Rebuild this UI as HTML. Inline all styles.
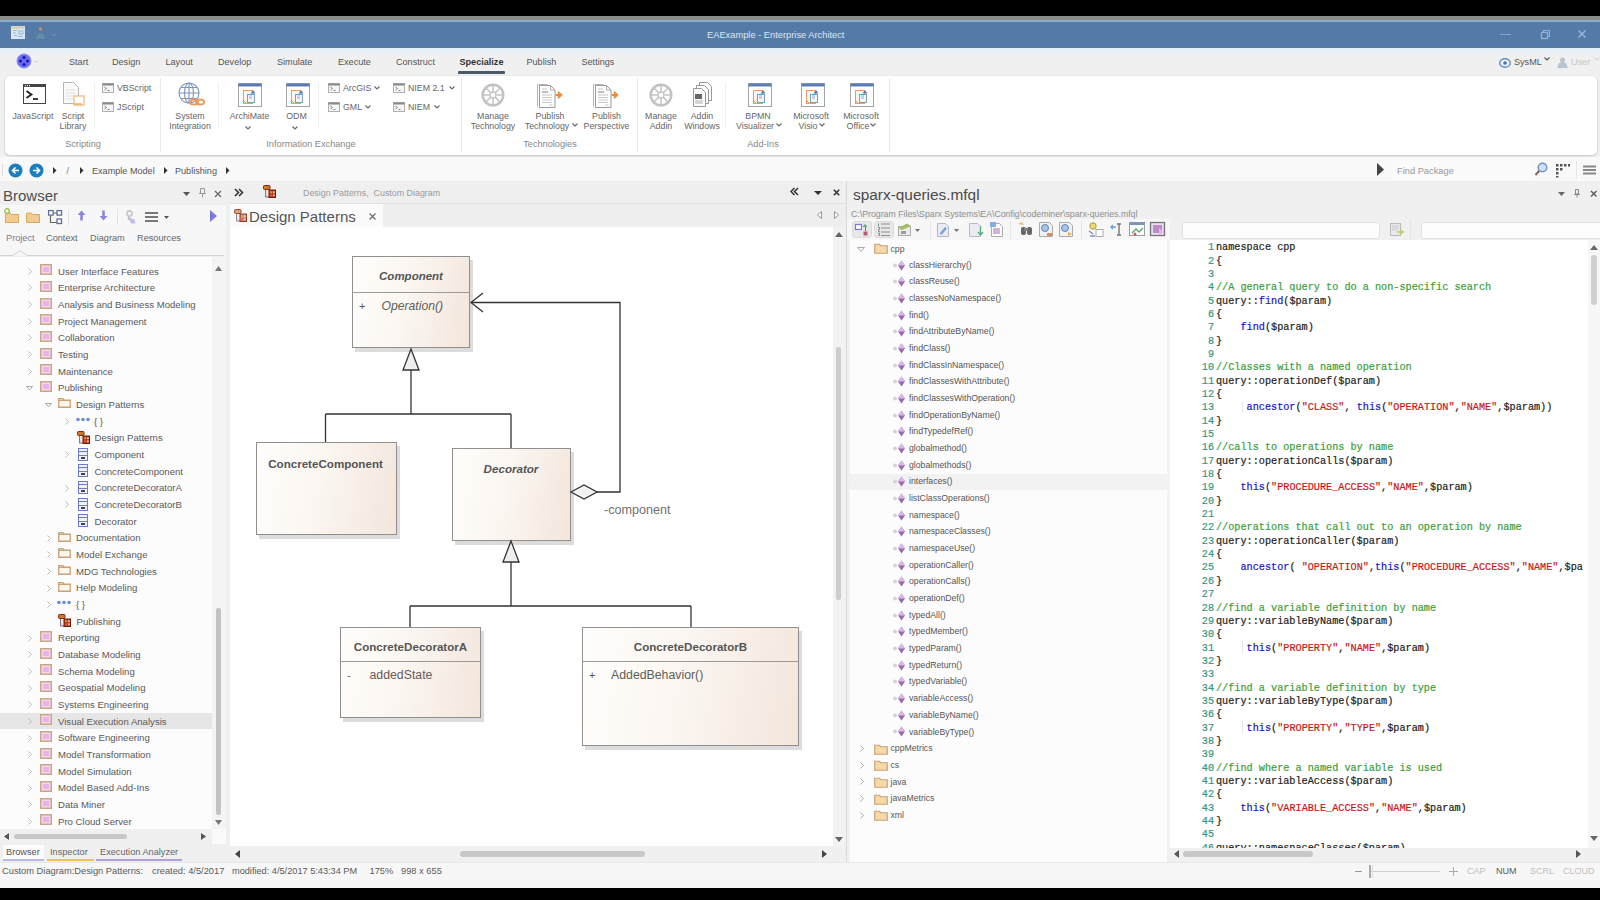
<!DOCTYPE html>
<html><head><meta charset="utf-8">
<style>
*{box-sizing:border-box;margin:0;padding:0}
html,body{width:1600px;height:900px;overflow:hidden;background:#000;font-family:"Liberation Sans",sans-serif;color:#444}
.a{position:absolute}
.t{position:absolute;white-space:nowrap;line-height:1}
svg.a{overflow:visible}
</style></head><body>
<div class="a" style="left:0px;top:0px;width:1600px;height:900px;background:#000;"></div>
<div class="a" style="left:0px;top:16px;width:1600px;height:872px;background:#f0f0f0;"></div>
<div class="a" style="left:0px;top:16px;width:1600px;height:4px;background:#8a8c89;"></div>
<div class="a" style="left:0px;top:20px;width:1600px;height:2px;background:#8cadd2;"></div>
<div class="a" style="left:0px;top:22px;width:1600px;height:26px;background:#547ba8;"></div>
<div class="a" style="left:0px;top:46px;width:1600px;height:2px;background:#58789c;"></div>
<svg class="a" style="left:11px;top:26px;" width="14" height="13" viewBox="0 0 14 13"><rect x="0" y="0" width="14" height="13" fill="#dbe6f3"/><rect x="0.5" y="0.5" width="13" height="2" fill="#d8c8a8"/><path d="M2 4.5h4M2 7h3M8 5h4v3H8zM3 9.5h3M7 10.5h5" stroke="#9fb6d6" stroke-width="1.1" fill="none"/></svg>
<svg class="a" style="left:35px;top:26px;" width="10" height="14" viewBox="0 0 10 14"><circle cx="5.5" cy="3" r="1.8" fill="#d9885a" opacity=".9"/><path d="M1 13c0-3.5 2-5.5 4.5-5.5S10 9.5 10 13z" fill="#6c9cac" opacity=".55"/></svg>
<svg class="a" style="left:51px;top:33px;" width="6" height="4" viewBox="0 0 6 4"><path d="M0.5 0.5L3 3L5.5 0.5" stroke="#7d96b5" fill="none"/></svg>
<div class="t" style="left:707px;top:30.83px;font-size:9.3px;color:#dce6f2;font-weight:normal;font-style:normal;font-family:'Liberation Sans',sans-serif;">EAExample - Enterprise Architect</div>
<div class="a" style="left:1500px;top:34px;width:11px;height:1px;background:#86a2c6;"></div>
<svg class="a" style="left:1540px;top:30px;" width="10" height="10" viewBox="0 0 10 10"><rect x="1.5" y="2.5" width="6" height="6" fill="none" stroke="#97afcf" stroke-width="1.3"/><path d="M3.5 2.5V0.5h6v6h-2" fill="none" stroke="#97afcf" stroke-width="1.1"/></svg>
<svg class="a" style="left:1577px;top:29px;" width="10" height="10" viewBox="0 0 10 10"><path d="M1.5 1.5L8.5 8.5M8.5 1.5L1.5 8.5" stroke="#a4badb" stroke-width="1.2"/></svg>
<div class="a" style="left:0px;top:48px;width:1600px;height:8px;background:linear-gradient(#e0effb,#e6f0f8 30%,#efefef);"></div>
<svg class="a" style="left:16px;top:53px;" width="16" height="16" viewBox="0 0 16 16"><circle cx="8" cy="8" r="7" fill="#6b6df0" stroke="#8f8ff8"/><circle cx="8" cy="4.5" r="1.6" fill="#1a1ab0"/><circle cx="4.5" cy="8" r="1.6" fill="#1a1ab0"/><circle cx="11.5" cy="8" r="1.6" fill="#1a1ab0"/><circle cx="8" cy="11.5" r="1.6" fill="#1a1ab0"/></svg>
<svg class="a" style="left:34px;top:60px;" width="5" height="3" viewBox="0 0 5 3"><path d="M0.5 0.5L2.5 2.5L4.5 0.5" stroke="#ccc" fill="none"/></svg>
<div class="t" style="left:69px;top:57.60px;font-size:9.1px;color:#555;font-weight:normal;font-style:normal;font-family:'Liberation Sans',sans-serif;">Start</div>
<div class="t" style="left:112px;top:57.60px;font-size:9.1px;color:#555;font-weight:normal;font-style:normal;font-family:'Liberation Sans',sans-serif;">Design</div>
<div class="t" style="left:165.5px;top:57.60px;font-size:9.1px;color:#555;font-weight:normal;font-style:normal;font-family:'Liberation Sans',sans-serif;">Layout</div>
<div class="t" style="left:218px;top:57.60px;font-size:9.1px;color:#555;font-weight:normal;font-style:normal;font-family:'Liberation Sans',sans-serif;">Develop</div>
<div class="t" style="left:277px;top:57.60px;font-size:9.1px;color:#555;font-weight:normal;font-style:normal;font-family:'Liberation Sans',sans-serif;">Simulate</div>
<div class="t" style="left:338px;top:57.60px;font-size:9.1px;color:#555;font-weight:normal;font-style:normal;font-family:'Liberation Sans',sans-serif;">Execute</div>
<div class="t" style="left:396px;top:57.60px;font-size:9.1px;color:#555;font-weight:normal;font-style:normal;font-family:'Liberation Sans',sans-serif;">Construct</div>
<div class="t" style="left:526.5px;top:57.60px;font-size:9.1px;color:#555;font-weight:normal;font-style:normal;font-family:'Liberation Sans',sans-serif;">Publish</div>
<div class="t" style="left:581.5px;top:57.60px;font-size:9.1px;color:#555;font-weight:normal;font-style:normal;font-family:'Liberation Sans',sans-serif;">Settings</div>
<div class="t" style="left:459.5px;top:57.60px;font-size:9.1px;color:#333;font-weight:bold;font-style:normal;font-family:'Liberation Sans',sans-serif;">Specialize</div>
<div class="a" style="left:458px;top:71px;width:47px;height:2.5px;background:#4d5966;border-radius:1px"></div>
<svg class="a" style="left:1499px;top:58px;" width="12" height="10" viewBox="0 0 12 10"><ellipse cx="6" cy="5" rx="5.3" ry="4.2" fill="none" stroke="#5b8fd0" stroke-width="1.4"/><circle cx="6" cy="5" r="1.8" fill="#3d73bd"/></svg>
<div class="t" style="left:1514px;top:57.80px;font-size:9.1px;color:#555;font-weight:normal;font-style:normal;font-family:'Liberation Sans',sans-serif;">SysML</div>
<svg class="a" style="left:1544px;top:57px;" width="6" height="4" viewBox="0 0 6 4"><path d="M0.5 0.5L3 3L5.5 0.5" stroke="#555" fill="none" stroke-width="1.1"/></svg>
<svg class="a" style="left:1557px;top:57px;" width="11" height="11" viewBox="0 0 11 11"><circle cx="5.5" cy="3" r="2.5" fill="#b8c4d0"/><path d="M0.5 11c0-4 2-6 5-6s5 2 5 6z" fill="#b8c4d0"/></svg>
<div class="t" style="left:1571px;top:57.80px;font-size:9.1px;color:#c8c8c8;font-weight:normal;font-style:normal;font-family:'Liberation Sans',sans-serif;">User</div>
<svg class="a" style="left:1594px;top:57px;" width="6" height="4" viewBox="0 0 6 4"><path d="M0.5 0.5L3 3L5.5 0.5" stroke="#ccc" fill="none"/></svg>
<div class="a" style="left:5px;top:76px;width:1592px;height:79px;background:#fff;border-radius:5px;box-shadow:0 1px 2.5px rgba(0,0,0,.16), 0 0 1px rgba(0,0,0,.12)"></div>
<svg class="a" style="left:23px;top:84px;" width="23" height="20" viewBox="0 0 23 20"><rect x="0.5" y="0.5" width="22" height="19" fill="#fff" stroke="#444"/><rect x="0.5" y="0.5" width="22" height="2.5" fill="#444"/><circle cx="2.5" cy="1.7" r=".6" fill="#fff"/><circle cx="4.5" cy="1.7" r=".6" fill="#fff"/><circle cx="6.5" cy="1.7" r=".6" fill="#fff"/><path d="M3.5 7l5 3.5-5 3.5" stroke="#222" stroke-width="1.8" fill="none"/><path d="M10 15h5" stroke="#222" stroke-width="1.8"/></svg>
<div class="t" style="left:12.4px;top:112.05px;font-size:8.8px;color:#666;font-weight:normal;font-style:normal;font-family:'Liberation Sans',sans-serif;">JavaScript</div>
<svg class="a" style="left:63px;top:82px;" width="23" height="25" viewBox="0 0 23 25"><path d="M0.5 0.5h10l5 5v16h-15z" fill="#fafafa" stroke="#b5b5b5"/><path d="M3 8h9M3 11h9M3 14h9M3 17h7" stroke="#ddd"/><rect x="11" y="14" width="10" height="9" fill="#fff" stroke="#f0c58a" stroke-width="1.5"/><path d="M11 22h8" stroke="#e8b56a" stroke-width="1.5"/></svg>
<div class="t" style="left:73px;top:112.05px;font-size:8.8px;color:#666;font-weight:normal;font-style:normal;font-family:'Liberation Sans',sans-serif;transform:translateX(-50%);">Script</div>
<div class="t" style="left:73px;top:121.85px;font-size:8.8px;color:#666;font-weight:normal;font-style:normal;font-family:'Liberation Sans',sans-serif;transform:translateX(-50%);">Library</div>
<div class="a" style="left:94px;top:82px;width:1px;height:46px;background:#f0f0f0;"></div>
<svg class="a" style="left:102px;top:83px;" width="12" height="10" viewBox="0 0 12 10"><rect x="0.5" y="0.5" width="11" height="9" fill="#f6f6f6" stroke="#b0b0b0"/><rect x="0.5" y="0.5" width="11" height="2" fill="#8a8a8a"/><path d="M2.5 4l2 1.5-2 1.5M5.5 7.5h2" stroke="#777" fill="none" stroke-width=".9"/></svg>
<div class="t" style="left:117px;top:84.05px;font-size:8.8px;color:#666;font-weight:normal;font-style:normal;font-family:'Liberation Sans',sans-serif;">VBScript</div>
<svg class="a" style="left:102px;top:102px;" width="12" height="10" viewBox="0 0 12 10"><rect x="0.5" y="0.5" width="11" height="9" fill="#f6f6f6" stroke="#b0b0b0"/><rect x="0.5" y="0.5" width="11" height="2" fill="#8a8a8a"/><path d="M2.5 4l2 1.5-2 1.5M5.5 7.5h2" stroke="#777" fill="none" stroke-width=".9"/></svg>
<div class="t" style="left:117px;top:103.05px;font-size:8.8px;color:#666;font-weight:normal;font-style:normal;font-family:'Liberation Sans',sans-serif;">JScript</div>
<div class="t" style="left:83px;top:140.21px;font-size:9.2px;color:#888;font-weight:normal;font-style:normal;font-family:'Liberation Sans',sans-serif;transform:translateX(-50%);">Scripting</div>
<div class="a" style="left:160px;top:78px;width:1px;height:74px;background:#eaeaea;"></div>
<svg class="a" style="left:177px;top:82px;" width="28" height="26" viewBox="0 0 28 26"><g fill="none" stroke="#7f95bb" stroke-width="1.1"><circle cx="12" cy="11" r="10"/><ellipse cx="12" cy="11" rx="4.5" ry="10"/><path d="M2 11h20M4 5.5h16M4 16.5h16M12 1v20"/></g><g fill="none" stroke="#f39a5a" stroke-width="2"><ellipse cx="17" cy="20" rx="4" ry="2.6"/><ellipse cx="23" cy="20" rx="4" ry="2.6"/></g></svg>
<div class="t" style="left:190px;top:112.05px;font-size:8.8px;color:#666;font-weight:normal;font-style:normal;font-family:'Liberation Sans',sans-serif;transform:translateX(-50%);">System</div>
<div class="t" style="left:190px;top:121.85px;font-size:8.8px;color:#666;font-weight:normal;font-style:normal;font-family:'Liberation Sans',sans-serif;transform:translateX(-50%);">Integration</div>
<div class="a" style="left:218px;top:82px;width:1px;height:46px;background:#f0f0f0;"></div>
<svg class="a" style="left:238px;top:83px;" width="24" height="24" viewBox="0 0 24 24"><rect x="0.5" y="0.5" width="23" height="23" fill="#fff" stroke="#a2a6ac"/><rect x="0.5" y="0.5" width="23" height="3" fill="#5a7db3"/><rect x="5.5" y="7.5" width="9" height="13" fill="#fff6ee" stroke="#ee9a66" stroke-width="1"/><rect x="9.5" y="11.5" width="7" height="8" fill="#f4f8fc" stroke="#7aa0b8" stroke-width="1"/><path d="M15 7l2.5 3.5h-5z" fill="#5a7ab8"/><path d="M11 13h3M11 15h3" stroke="#7d97c4" stroke-width=".8"/><path d="M5 17l3 3" stroke="#e8873c"/></svg>
<div class="t" style="left:249.5px;top:112.05px;font-size:8.8px;color:#666;font-weight:normal;font-style:normal;font-family:'Liberation Sans',sans-serif;transform:translateX(-50%);">ArchiMate</div>
<svg class="a" style="left:245px;top:125.5px;" width="6" height="4" viewBox="0 0 6 4"><path d="M0.5 0.5L3 3L5.5 0.5" stroke="#666" fill="none" stroke-width="1.1"/></svg>
<svg class="a" style="left:286px;top:83px;" width="24" height="24" viewBox="0 0 24 24"><rect x="0.5" y="0.5" width="23" height="23" fill="#fff" stroke="#a2a6ac"/><rect x="0.5" y="0.5" width="23" height="3" fill="#5a7db3"/><rect x="5.5" y="7.5" width="9" height="13" fill="#fff6ee" stroke="#ee9a66" stroke-width="1"/><rect x="9.5" y="11.5" width="7" height="8" fill="#f4f8fc" stroke="#7aa0b8" stroke-width="1"/><path d="M15 7l2.5 3.5h-5z" fill="#5a7ab8"/><path d="M11 13h3M11 15h3" stroke="#7d97c4" stroke-width=".8"/><path d="M5 17l3 3" stroke="#e8873c"/></svg>
<div class="t" style="left:296.5px;top:112.05px;font-size:8.8px;color:#666;font-weight:normal;font-style:normal;font-family:'Liberation Sans',sans-serif;transform:translateX(-50%);">ODM</div>
<svg class="a" style="left:292px;top:125.5px;" width="6" height="4" viewBox="0 0 6 4"><path d="M0.5 0.5L3 3L5.5 0.5" stroke="#666" fill="none" stroke-width="1.1"/></svg>
<div class="a" style="left:318px;top:82px;width:1px;height:46px;background:#f0f0f0;"></div>
<svg class="a" style="left:328px;top:83px;" width="12" height="10" viewBox="0 0 12 10"><rect x="0.5" y="0.5" width="11" height="9" fill="#f6f6f6" stroke="#b0b0b0"/><rect x="0.5" y="0.5" width="11" height="2" fill="#8a8a8a"/><path d="M2.5 4l2 1.5-2 1.5M5.5 7.5h2" stroke="#777" fill="none" stroke-width=".9"/></svg>
<div class="t" style="left:343px;top:84.05px;font-size:8.8px;color:#666;font-weight:normal;font-style:normal;font-family:'Liberation Sans',sans-serif;">ArcGIS</div>
<svg class="a" style="left:374px;top:86px;" width="6" height="4" viewBox="0 0 6 4"><path d="M0.5 0.5L3 3L5.5 0.5" stroke="#666" fill="none" stroke-width="1.1"/></svg>
<svg class="a" style="left:328px;top:102px;" width="12" height="10" viewBox="0 0 12 10"><rect x="0.5" y="0.5" width="11" height="9" fill="#f6f6f6" stroke="#b0b0b0"/><rect x="0.5" y="0.5" width="11" height="2" fill="#8a8a8a"/><path d="M2.5 4l2 1.5-2 1.5M5.5 7.5h2" stroke="#777" fill="none" stroke-width=".9"/></svg>
<div class="t" style="left:343px;top:103.05px;font-size:8.8px;color:#666;font-weight:normal;font-style:normal;font-family:'Liberation Sans',sans-serif;">GML</div>
<svg class="a" style="left:365px;top:105px;" width="6" height="4" viewBox="0 0 6 4"><path d="M0.5 0.5L3 3L5.5 0.5" stroke="#666" fill="none" stroke-width="1.1"/></svg>
<svg class="a" style="left:393px;top:83px;" width="12" height="10" viewBox="0 0 12 10"><rect x="0.5" y="0.5" width="11" height="9" fill="#f6f6f6" stroke="#b0b0b0"/><rect x="0.5" y="0.5" width="11" height="2" fill="#8a8a8a"/><path d="M2.5 4l2 1.5-2 1.5M5.5 7.5h2" stroke="#777" fill="none" stroke-width=".9"/></svg>
<div class="t" style="left:408px;top:84.05px;font-size:8.8px;color:#666;font-weight:normal;font-style:normal;font-family:'Liberation Sans',sans-serif;">NIEM 2.1</div>
<svg class="a" style="left:449px;top:86px;" width="6" height="4" viewBox="0 0 6 4"><path d="M0.5 0.5L3 3L5.5 0.5" stroke="#666" fill="none" stroke-width="1.1"/></svg>
<svg class="a" style="left:393px;top:102px;" width="12" height="10" viewBox="0 0 12 10"><rect x="0.5" y="0.5" width="11" height="9" fill="#f6f6f6" stroke="#b0b0b0"/><rect x="0.5" y="0.5" width="11" height="2" fill="#8a8a8a"/><path d="M2.5 4l2 1.5-2 1.5M5.5 7.5h2" stroke="#777" fill="none" stroke-width=".9"/></svg>
<div class="t" style="left:408px;top:103.05px;font-size:8.8px;color:#666;font-weight:normal;font-style:normal;font-family:'Liberation Sans',sans-serif;">NIEM</div>
<svg class="a" style="left:434px;top:105px;" width="6" height="4" viewBox="0 0 6 4"><path d="M0.5 0.5L3 3L5.5 0.5" stroke="#666" fill="none" stroke-width="1.1"/></svg>
<div class="t" style="left:311px;top:140.21px;font-size:9.2px;color:#888;font-weight:normal;font-style:normal;font-family:'Liberation Sans',sans-serif;transform:translateX(-50%);">Information Exchange</div>
<div class="a" style="left:461px;top:78px;width:1px;height:74px;background:#eaeaea;"></div>
<svg class="a" style="left:481px;top:82.5px;" width="24" height="24" viewBox="0 0 24 24"><g stroke="#c2c2c2" fill="none"><circle cx="12" cy="12" r="10.3" stroke-width="2.4"/><circle cx="12" cy="12" r="3" stroke-width="1.4"/><g stroke-width="1.5"><line x1="15.60" y1="12.00" x2="22.00" y2="12.00"/><line x1="14.55" y1="14.55" x2="19.07" y2="19.07"/><line x1="12.00" y1="15.60" x2="12.00" y2="22.00"/><line x1="9.45" y1="14.55" x2="4.93" y2="19.07"/><line x1="8.40" y1="12.00" x2="2.00" y2="12.00"/><line x1="9.45" y1="9.45" x2="4.93" y2="4.93"/><line x1="12.00" y1="8.40" x2="12.00" y2="2.00"/><line x1="14.55" y1="9.45" x2="19.07" y2="4.93"/></g></g></svg>
<div class="t" style="left:493px;top:112.05px;font-size:8.8px;color:#666;font-weight:normal;font-style:normal;font-family:'Liberation Sans',sans-serif;transform:translateX(-50%);">Manage</div>
<div class="t" style="left:493px;top:121.85px;font-size:8.8px;color:#666;font-weight:normal;font-style:normal;font-family:'Liberation Sans',sans-serif;transform:translateX(-50%);">Technology</div>
<svg class="a" style="left:537px;top:84px;" width="27" height="24" viewBox="0 0 27 24"><path d="M0.5 22.5V0.5h10" fill="none" stroke="#b8b8b8"/><path d="M2.5 23.5V1.5h11l4.5 4.5v17.5z" fill="#fff" stroke="#9a9a9a"/><path d="M13.5 1.5v4.5h4.5" fill="none" stroke="#aaa"/><path d="M5 5h5M5 8h6M5 11h10M5 13.5h10M5 16h10M5 18.5h10M12 21h3" stroke="#c8c8c8"/><path d="M5 8h6" stroke="#999"/><path d="M18.5 11h5M21 8l3.2 3-3.2 3" stroke="#ec8a3c" stroke-width="2" fill="none"/></svg>
<div class="t" style="left:550px;top:112.05px;font-size:8.8px;color:#666;font-weight:normal;font-style:normal;font-family:'Liberation Sans',sans-serif;transform:translateX(-50%);">Publish</div>
<div class="t" style="left:547px;top:121.85px;font-size:8.8px;color:#666;font-weight:normal;font-style:normal;font-family:'Liberation Sans',sans-serif;transform:translateX(-50%);">Technology</div>
<svg class="a" style="left:572px;top:123px;" width="6" height="4" viewBox="0 0 6 4"><path d="M0.5 0.5L3 3L5.5 0.5" stroke="#666" fill="none" stroke-width="1.1"/></svg>
<svg class="a" style="left:593px;top:84px;" width="27" height="24" viewBox="0 0 27 24"><path d="M0.5 22.5V0.5h10" fill="none" stroke="#b8b8b8"/><path d="M2.5 23.5V1.5h11l4.5 4.5v17.5z" fill="#fff" stroke="#9a9a9a"/><path d="M13.5 1.5v4.5h4.5" fill="none" stroke="#aaa"/><path d="M5 5h5M5 8h6M5 11h10M5 13.5h10M5 16h10M5 18.5h10M12 21h3" stroke="#c8c8c8"/><path d="M5 8h6" stroke="#999"/><path d="M18.5 11h5M21 8l3.2 3-3.2 3" stroke="#ec8a3c" stroke-width="2" fill="none"/></svg>
<div class="t" style="left:606.5px;top:112.05px;font-size:8.8px;color:#666;font-weight:normal;font-style:normal;font-family:'Liberation Sans',sans-serif;transform:translateX(-50%);">Publish</div>
<div class="t" style="left:606.5px;top:121.85px;font-size:8.8px;color:#666;font-weight:normal;font-style:normal;font-family:'Liberation Sans',sans-serif;transform:translateX(-50%);">Perspective</div>
<div class="t" style="left:550px;top:140.21px;font-size:9.2px;color:#888;font-weight:normal;font-style:normal;font-family:'Liberation Sans',sans-serif;transform:translateX(-50%);">Technologies</div>
<div class="a" style="left:637px;top:78px;width:1px;height:74px;background:#eaeaea;"></div>
<svg class="a" style="left:649px;top:82.5px;" width="24" height="24" viewBox="0 0 24 24"><g stroke="#c2c2c2" fill="none"><circle cx="12" cy="12" r="10.3" stroke-width="2.4"/><circle cx="12" cy="12" r="3" stroke-width="1.4"/><g stroke-width="1.5"><line x1="15.60" y1="12.00" x2="22.00" y2="12.00"/><line x1="14.55" y1="14.55" x2="19.07" y2="19.07"/><line x1="12.00" y1="15.60" x2="12.00" y2="22.00"/><line x1="9.45" y1="14.55" x2="4.93" y2="19.07"/><line x1="8.40" y1="12.00" x2="2.00" y2="12.00"/><line x1="9.45" y1="9.45" x2="4.93" y2="4.93"/><line x1="12.00" y1="8.40" x2="12.00" y2="2.00"/><line x1="14.55" y1="9.45" x2="19.07" y2="4.93"/></g></g></svg>
<div class="t" style="left:661px;top:112.05px;font-size:8.8px;color:#666;font-weight:normal;font-style:normal;font-family:'Liberation Sans',sans-serif;transform:translateX(-50%);">Manage</div>
<div class="t" style="left:661px;top:121.85px;font-size:8.8px;color:#666;font-weight:normal;font-style:normal;font-family:'Liberation Sans',sans-serif;transform:translateX(-50%);">Addin</div>
<svg class="a" style="left:693px;top:82px;" width="20" height="26" viewBox="0 0 20 26"><path d="M6.5 0.5h8l4 4v14h-12z" fill="#fff" stroke="#999"/><path d="M3.5 3.5h8l4 4v14h-12z" fill="#fff" stroke="#999"/><path d="M0.5 6.5h8l4 4v14h-12z" fill="#fff" stroke="#999"/><rect x="2" y="12" width="7" height="5" fill="#666"/><path d="M2 19h8M2 21h8" stroke="#aaa"/></svg>
<div class="t" style="left:702px;top:112.05px;font-size:8.8px;color:#666;font-weight:normal;font-style:normal;font-family:'Liberation Sans',sans-serif;transform:translateX(-50%);">Addin</div>
<div class="t" style="left:702px;top:121.85px;font-size:8.8px;color:#666;font-weight:normal;font-style:normal;font-family:'Liberation Sans',sans-serif;transform:translateX(-50%);">Windows</div>
<div class="a" style="left:724.5px;top:82px;width:1px;height:46px;background:#f0f0f0;"></div>
<svg class="a" style="left:748px;top:83px;" width="24" height="24" viewBox="0 0 24 24"><rect x="0.5" y="0.5" width="23" height="23" fill="#fff" stroke="#a2a6ac"/><rect x="0.5" y="0.5" width="23" height="3" fill="#5a7db3"/><rect x="5.5" y="7.5" width="9" height="13" fill="#fff6ee" stroke="#ee9a66" stroke-width="1"/><rect x="9.5" y="11.5" width="7" height="8" fill="#f4f8fc" stroke="#7aa0b8" stroke-width="1"/><path d="M15 7l2.5 3.5h-5z" fill="#5a7ab8"/><path d="M11 13h3M11 15h3" stroke="#7d97c4" stroke-width=".8"/><path d="M5 17l3 3" stroke="#e8873c"/></svg>
<div class="t" style="left:758px;top:112.05px;font-size:8.8px;color:#666;font-weight:normal;font-style:normal;font-family:'Liberation Sans',sans-serif;transform:translateX(-50%);">BPMN</div>
<div class="t" style="left:755px;top:121.85px;font-size:8.8px;color:#666;font-weight:normal;font-style:normal;font-family:'Liberation Sans',sans-serif;transform:translateX(-50%);">Visualizer</div>
<svg class="a" style="left:776px;top:123px;" width="6" height="4" viewBox="0 0 6 4"><path d="M0.5 0.5L3 3L5.5 0.5" stroke="#666" fill="none" stroke-width="1.1"/></svg>
<svg class="a" style="left:801px;top:83px;" width="24" height="24" viewBox="0 0 24 24"><rect x="0.5" y="0.5" width="23" height="23" fill="#fff" stroke="#a2a6ac"/><rect x="0.5" y="0.5" width="23" height="3" fill="#5a7db3"/><rect x="5.5" y="7.5" width="9" height="13" fill="#fff6ee" stroke="#ee9a66" stroke-width="1"/><rect x="9.5" y="11.5" width="7" height="8" fill="#f4f8fc" stroke="#7aa0b8" stroke-width="1"/><path d="M15 7l2.5 3.5h-5z" fill="#5a7ab8"/><path d="M11 13h3M11 15h3" stroke="#7d97c4" stroke-width=".8"/><path d="M5 17l3 3" stroke="#e8873c"/></svg>
<div class="t" style="left:811px;top:112.05px;font-size:8.8px;color:#666;font-weight:normal;font-style:normal;font-family:'Liberation Sans',sans-serif;transform:translateX(-50%);">Microsoft</div>
<div class="t" style="left:808px;top:121.85px;font-size:8.8px;color:#666;font-weight:normal;font-style:normal;font-family:'Liberation Sans',sans-serif;transform:translateX(-50%);">Visio</div>
<svg class="a" style="left:819px;top:123px;" width="6" height="4" viewBox="0 0 6 4"><path d="M0.5 0.5L3 3L5.5 0.5" stroke="#666" fill="none" stroke-width="1.1"/></svg>
<svg class="a" style="left:850px;top:83px;" width="24" height="24" viewBox="0 0 24 24"><rect x="0.5" y="0.5" width="23" height="23" fill="#fff" stroke="#a2a6ac"/><rect x="0.5" y="0.5" width="23" height="3" fill="#5a7db3"/><rect x="5.5" y="7.5" width="9" height="13" fill="#fff6ee" stroke="#ee9a66" stroke-width="1"/><rect x="9.5" y="11.5" width="7" height="8" fill="#f4f8fc" stroke="#7aa0b8" stroke-width="1"/><path d="M15 7l2.5 3.5h-5z" fill="#5a7ab8"/><path d="M11 13h3M11 15h3" stroke="#7d97c4" stroke-width=".8"/><path d="M5 17l3 3" stroke="#e8873c"/></svg>
<div class="t" style="left:861px;top:112.05px;font-size:8.8px;color:#666;font-weight:normal;font-style:normal;font-family:'Liberation Sans',sans-serif;transform:translateX(-50%);">Microsoft</div>
<div class="t" style="left:858px;top:121.85px;font-size:8.8px;color:#666;font-weight:normal;font-style:normal;font-family:'Liberation Sans',sans-serif;transform:translateX(-50%);">Office</div>
<svg class="a" style="left:870px;top:123px;" width="6" height="4" viewBox="0 0 6 4"><path d="M0.5 0.5L3 3L5.5 0.5" stroke="#666" fill="none" stroke-width="1.1"/></svg>
<div class="t" style="left:763px;top:140.21px;font-size:9.2px;color:#888;font-weight:normal;font-style:normal;font-family:'Liberation Sans',sans-serif;transform:translateX(-50%);">Add-Ins</div>
<div class="a" style="left:889px;top:78px;width:1px;height:74px;background:#eaeaea;"></div>
<div class="a" style="left:0px;top:157px;width:1600px;height:24px;background:#f9f9f9;"></div>
<div class="a" style="left:2px;top:164px;width:1px;height:12px;background:#ddd;"></div>
<svg class="a" style="left:8px;top:163px;" width="15" height="15" viewBox="0 0 15 15"><circle cx="7.5" cy="7.5" r="7" fill="#1a7fc1"/><path d="M11 7.5H4.5M7.5 4.5l-3 3 3 3" stroke="#fff" stroke-width="1.6" fill="none"/></svg>
<svg class="a" style="left:29px;top:163px;" width="15" height="15" viewBox="0 0 15 15"><circle cx="7.5" cy="7.5" r="7" fill="#1a7fc1"/><path d="M4 7.5h6.5M7.5 4.5l3 3-3 3" stroke="#fff" stroke-width="1.6" fill="none"/></svg>
<svg class="a" style="left:53px;top:166.7px;" width="3.5" height="7.0" viewBox="0 0 3.5 7.0"><path d="M0 0L3.5 3.5L0 7.0z" fill="#333"/></svg>
<div class="t" style="left:66.5px;top:167.38px;font-size:9px;color:#777;font-weight:normal;font-style:normal;font-family:'Liberation Sans',sans-serif;">/</div>
<svg class="a" style="left:80px;top:166.7px;" width="3.5" height="7.0" viewBox="0 0 3.5 7.0"><path d="M0 0L3.5 3.5L0 7.0z" fill="#333"/></svg>
<div class="t" style="left:92px;top:167.30px;font-size:9.1px;color:#555;font-weight:normal;font-style:normal;font-family:'Liberation Sans',sans-serif;">Example Model</div>
<svg class="a" style="left:164px;top:166.7px;" width="3.5" height="7.0" viewBox="0 0 3.5 7.0"><path d="M0 0L3.5 3.5L0 7.0z" fill="#333"/></svg>
<div class="t" style="left:175px;top:167.30px;font-size:9.1px;color:#555;font-weight:normal;font-style:normal;font-family:'Liberation Sans',sans-serif;">Publishing</div>
<svg class="a" style="left:226px;top:166.7px;" width="3.5" height="7.0" viewBox="0 0 3.5 7.0"><path d="M0 0L3.5 3.5L0 7.0z" fill="#333"/></svg>
<svg class="a" style="left:1377px;top:163px;" width="7" height="13" viewBox="0 0 7 13"><path d="M0 0L7 6.5L0 13z" fill="#444"/></svg>
<div class="a" style="left:1392px;top:160px;width:138px;height:20px;background:#fbfbfb;border-radius:2px"></div>
<div class="t" style="left:1397px;top:166.63px;font-size:9.3px;color:#999;font-weight:normal;font-style:normal;font-family:'Liberation Sans',sans-serif;">Find Package</div>
<svg class="a" style="left:1534px;top:162px;" width="14" height="15" viewBox="0 0 14 15"><path d="M5.5 8.5L1.5 13" stroke="#8a6a60" stroke-width="2.2"/><circle cx="8.5" cy="5.5" r="4.3" fill="#cfe0f8" stroke="#6f95c8" stroke-width="1.5"/></svg>
<svg class="a" style="left:1556px;top:164px;" width="14" height="13" viewBox="0 0 14 13"><g fill="#555"><rect x="0" y="0" width="2.5" height="2.5"/><rect x="4" y="0" width="2.5" height="2.5"/><rect x="8" y="0" width="2.5" height="2.5"/><rect x="12" y="0" width="2" height="2.5"/><rect x="0" y="4" width="2.5" height="2.5"/><rect x="4" y="4" width="2.5" height="2.5"/><rect x="0" y="8" width="2.5" height="2.5"/><rect x="0" y="12" width="2.5" height="1.5"/></g></svg>
<div class="a" style="left:1576px;top:161px;width:1px;height:18px;background:#e6e6e6;"></div>
<svg class="a" style="left:1583px;top:165px;" width="14" height="10" viewBox="0 0 14 10"><path d="M0 1.5h13M0 5h13M0 8.5h13" stroke="#888" stroke-width="1.8"/></svg>
<div class="a" style="left:0px;top:181px;width:226px;height:681px;background:#f0f0f0;"></div>
<div class="a" style="left:0px;top:205px;width:226px;height:51px;background:#f7f7f7;"></div>
<div class="a" style="left:226px;top:181px;width:4px;height:681px;background:#f0f0f0;"></div>
<div class="a" style="left:229.5px;top:181px;width:1px;height:681px;background:#e0e0e0;"></div>
<div class="t" style="left:3px;top:187.50px;font-size:15px;color:#505050;font-weight:normal;font-style:normal;font-family:'Liberation Sans',sans-serif;">Browser</div>
<svg class="a" style="left:183px;top:192px;" width="7" height="4" viewBox="0 0 7 4"><path d="M0 0h7L3.5 4z" fill="#555"/></svg>
<svg class="a" style="left:199px;top:188px;" width="7" height="10" viewBox="0 0 7 10"><path d="M1.5 0.5h4v5h-4z M0 5.5h7 M3.5 5.5v4" stroke="#999" fill="none"/></svg>
<svg class="a" style="left:214px;top:190px;" width="8" height="8" viewBox="0 0 8 8"><path d="M1 1l6 6M7 1l-6 6" stroke="#666" stroke-width="1.3"/></svg>
<svg class="a" style="left:5px;top:211px;" width="14" height="12" viewBox="0 0 14 12"><path d="M0.5 2.5v9h13v-8h-7l-1.5-1.5h-4z" fill="#f0cb92" stroke="#d9a95a"/></svg>
<svg class="a" style="left:4px;top:208px;" width="6" height="6" viewBox="0 0 6 6"><circle cx="3" cy="3" r="2.3" fill="#fff" stroke="#8fbf3a" stroke-width="1.2"/></svg>
<svg class="a" style="left:26px;top:211px;" width="14" height="12" viewBox="0 0 14 12"><path d="M0.5 2.5v9h13v-8h-7l-1.5-1.5h-4z" fill="#f0cb92" stroke="#d9a95a"/></svg>
<svg class="a" style="left:48px;top:210px;" width="14" height="14" viewBox="0 0 14 14"><path d="M2.5 5.5v7h6.5M5.5 3h4" stroke="#666" fill="none" stroke-width="1.2"/><g fill="#fff" stroke="#5c6f9c" stroke-width="1.3"><rect x="0.6" y="0.6" width="4.5" height="4.5"/><rect x="9" y="0.6" width="4.5" height="4.5"/><rect x="9" y="9" width="4.5" height="4.5"/></g></svg>
<div class="a" style="left:68px;top:209px;width:1px;height:16px;background:#e2e2e2;"></div>
<svg class="a" style="left:77px;top:210px;" width="9" height="11" viewBox="0 0 9 11"><path d="M4.5 0.5L8.5 5H5.8v5.5H3.2V5H0.5z" fill="#8a86e0"/></svg>
<svg class="a" style="left:99px;top:210px;" width="9" height="11" viewBox="0 0 9 11"><path d="M4.5 10.5L8.5 6H5.8V0.5H3.2V6H0.5z" fill="#8a86e0"/></svg>
<div class="a" style="left:117px;top:209px;width:1px;height:16px;background:#e2e2e2;"></div>
<svg class="a" style="left:125px;top:210px;" width="11" height="14" viewBox="0 0 11 14"><circle cx="4.5" cy="3.5" r="2.6" fill="none" stroke="#c8c8c8" stroke-width="1.6"/><path d="M3.5 6.5v3l3 4h4l-1-4-3-1z" fill="#c4bce8"/><path d="M3.5 6.5v3" stroke="#bbb" stroke-width="1.4"/></svg>
<svg class="a" style="left:145px;top:212px;" width="14" height="10" viewBox="0 0 14 10"><path d="M0 1h13M0 5h13M0 9h13" stroke="#777" stroke-width="1.8"/></svg>
<svg class="a" style="left:164px;top:216px;" width="5" height="3" viewBox="0 0 5 3"><path d="M0 0h5L2.5 3z" fill="#555"/></svg>
<svg class="a" style="left:210px;top:210px;" width="7" height="12" viewBox="0 0 7 12"><path d="M0 0L7 6L0 12z" fill="#7a7de0"/></svg>
<div class="t" style="left:6px;top:233.71px;font-size:9.2px;color:#7a7a9a;font-weight:normal;font-style:normal;font-family:'Liberation Sans',sans-serif;">Project</div>
<div class="t" style="left:46px;top:233.71px;font-size:9.2px;color:#666;font-weight:normal;font-style:normal;font-family:'Liberation Sans',sans-serif;">Context</div>
<div class="t" style="left:90px;top:233.71px;font-size:9.2px;color:#666;font-weight:normal;font-style:normal;font-family:'Liberation Sans',sans-serif;">Diagram</div>
<div class="t" style="left:137px;top:233.71px;font-size:9.2px;color:#666;font-weight:normal;font-style:normal;font-family:'Liberation Sans',sans-serif;">Resources</div>
<svg class="a" style="left:0px;top:249px;" width="226" height="8" viewBox="0 0 226 8"><path d="M0 6.5H13L20 1.5L27 6.5H224" stroke="#d4d4d4" fill="none"/></svg>
<div class="a" style="left:0px;top:257px;width:212px;height:572px;background:#fcfcfc;"></div>
<div class="a" style="left:212px;top:257px;width:14px;height:572px;background:#f4f4f4;"></div>
<svg class="a" style="left:215px;top:266px;" width="7" height="5" viewBox="0 0 7 5"><path d="M0 5L3.5 0L7 5z" fill="#777"/></svg>
<div class="a" style="left:216px;top:608px;width:5px;height:207px;background:#c2c2c2;border-radius:2px"></div>
<svg class="a" style="left:215px;top:820px;" width="7" height="5" viewBox="0 0 7 5"><path d="M0 0L7 0L3.5 5z" fill="#777"/></svg>
<div class="a" style="left:0px;top:829px;width:212px;height:15px;background:#f0f0f0;"></div>
<svg class="a" style="left:4px;top:833px;" width="5" height="7" viewBox="0 0 5 7"><path d="M5 0v7L0 3.5z" fill="#555"/></svg>
<div class="a" style="left:14px;top:834px;width:113px;height:5px;background:#c7c7c7;border-radius:3px"></div>
<svg class="a" style="left:201px;top:833px;" width="5" height="7" viewBox="0 0 5 7"><path d="M0 0v7l5-3.5z" fill="#555"/></svg>
<div class="a" style="left:212px;top:829px;width:14px;height:15px;background:#fafafa;"></div>
<div class="a" style="left:0px;top:844px;width:226px;height:18px;background:#f0f0f0;"></div>
<div class="a" style="left:3px;top:845px;width:41px;height:15px;background:#fcfcfc;"></div>
<div class="t" style="left:6px;top:847.71px;font-size:9.2px;color:#555;font-weight:normal;font-style:normal;font-family:'Liberation Sans',sans-serif;">Browser</div>
<div class="a" style="left:3px;top:859px;width:41px;height:1.5px;background:#b8b8e8;"></div>
<div class="t" style="left:50px;top:847.71px;font-size:9.2px;color:#666;font-weight:normal;font-style:normal;font-family:'Liberation Sans',sans-serif;">Inspector</div>
<div class="a" style="left:47px;top:859px;width:47px;height:1.5px;background:#f2c454;"></div>
<div class="t" style="left:100px;top:847.71px;font-size:9.2px;color:#666;font-weight:normal;font-style:normal;font-family:'Liberation Sans',sans-serif;">Execution Analyzer</div>
<div class="a" style="left:96px;top:859px;width:86px;height:1.5px;background:#b39ddb;"></div>
<div class="a" style="left:0px;top:713.3900000000001px;width:212px;height:16px;background:#e6e6e6;"></div>
<svg class="a" style="left:28.0px;top:267.8px;" width="4" height="7" viewBox="0 0 4 7"><path d="M0.5 0.5L3.5 3.5L0.5 6.5" stroke="#b4b4b4" fill="none" stroke-width=".9"/></svg>
<svg class="a" style="left:39.5px;top:264.3px;" width="12" height="11" viewBox="0 0 12 11"><rect x="0.75" y="0.75" width="10.5" height="9.5" fill="#f6d4f2" stroke="#c6aa86" stroke-width="1.5"/><rect x="3" y="3" width="6" height="5" fill="#e8b4e8"/></svg>
<div class="t" style="left:58px;top:266.57px;font-size:9.6px;color:#5a5a5a;font-weight:normal;font-style:normal;font-family:'Liberation Sans',sans-serif;">User Interface Features</div>
<svg class="a" style="left:28.0px;top:284.47px;" width="4" height="7" viewBox="0 0 4 7"><path d="M0.5 0.5L3.5 3.5L0.5 6.5" stroke="#b4b4b4" fill="none" stroke-width=".9"/></svg>
<svg class="a" style="left:39.5px;top:280.97px;" width="12" height="11" viewBox="0 0 12 11"><rect x="0.75" y="0.75" width="10.5" height="9.5" fill="#f6d4f2" stroke="#c6aa86" stroke-width="1.5"/><rect x="3" y="3" width="6" height="5" fill="#e8b4e8"/></svg>
<div class="t" style="left:58px;top:283.24px;font-size:9.6px;color:#5a5a5a;font-weight:normal;font-style:normal;font-family:'Liberation Sans',sans-serif;">Enterprise Architecture</div>
<svg class="a" style="left:28.0px;top:301.14px;" width="4" height="7" viewBox="0 0 4 7"><path d="M0.5 0.5L3.5 3.5L0.5 6.5" stroke="#b4b4b4" fill="none" stroke-width=".9"/></svg>
<svg class="a" style="left:39.5px;top:297.64px;" width="12" height="11" viewBox="0 0 12 11"><rect x="0.75" y="0.75" width="10.5" height="9.5" fill="#f6d4f2" stroke="#c6aa86" stroke-width="1.5"/><rect x="3" y="3" width="6" height="5" fill="#e8b4e8"/></svg>
<div class="t" style="left:58px;top:299.91px;font-size:9.6px;color:#5a5a5a;font-weight:normal;font-style:normal;font-family:'Liberation Sans',sans-serif;">Analysis and Business Modeling</div>
<svg class="a" style="left:28.0px;top:317.81px;" width="4" height="7" viewBox="0 0 4 7"><path d="M0.5 0.5L3.5 3.5L0.5 6.5" stroke="#b4b4b4" fill="none" stroke-width=".9"/></svg>
<svg class="a" style="left:39.5px;top:314.31px;" width="12" height="11" viewBox="0 0 12 11"><rect x="0.75" y="0.75" width="10.5" height="9.5" fill="#f6d4f2" stroke="#c6aa86" stroke-width="1.5"/><rect x="3" y="3" width="6" height="5" fill="#e8b4e8"/></svg>
<div class="t" style="left:58px;top:316.58px;font-size:9.6px;color:#5a5a5a;font-weight:normal;font-style:normal;font-family:'Liberation Sans',sans-serif;">Project Management</div>
<svg class="a" style="left:28.0px;top:334.48px;" width="4" height="7" viewBox="0 0 4 7"><path d="M0.5 0.5L3.5 3.5L0.5 6.5" stroke="#b4b4b4" fill="none" stroke-width=".9"/></svg>
<svg class="a" style="left:39.5px;top:330.98px;" width="12" height="11" viewBox="0 0 12 11"><rect x="0.75" y="0.75" width="10.5" height="9.5" fill="#f6d4f2" stroke="#c6aa86" stroke-width="1.5"/><rect x="3" y="3" width="6" height="5" fill="#e8b4e8"/></svg>
<div class="t" style="left:58px;top:333.25px;font-size:9.6px;color:#5a5a5a;font-weight:normal;font-style:normal;font-family:'Liberation Sans',sans-serif;">Collaboration</div>
<svg class="a" style="left:28.0px;top:351.15000000000003px;" width="4" height="7" viewBox="0 0 4 7"><path d="M0.5 0.5L3.5 3.5L0.5 6.5" stroke="#b4b4b4" fill="none" stroke-width=".9"/></svg>
<svg class="a" style="left:39.5px;top:347.65000000000003px;" width="12" height="11" viewBox="0 0 12 11"><rect x="0.75" y="0.75" width="10.5" height="9.5" fill="#f6d4f2" stroke="#c6aa86" stroke-width="1.5"/><rect x="3" y="3" width="6" height="5" fill="#e8b4e8"/></svg>
<div class="t" style="left:58px;top:349.92px;font-size:9.6px;color:#5a5a5a;font-weight:normal;font-style:normal;font-family:'Liberation Sans',sans-serif;">Testing</div>
<svg class="a" style="left:28.0px;top:367.82000000000005px;" width="4" height="7" viewBox="0 0 4 7"><path d="M0.5 0.5L3.5 3.5L0.5 6.5" stroke="#b4b4b4" fill="none" stroke-width=".9"/></svg>
<svg class="a" style="left:39.5px;top:364.32000000000005px;" width="12" height="11" viewBox="0 0 12 11"><rect x="0.75" y="0.75" width="10.5" height="9.5" fill="#f6d4f2" stroke="#c6aa86" stroke-width="1.5"/><rect x="3" y="3" width="6" height="5" fill="#e8b4e8"/></svg>
<div class="t" style="left:58px;top:366.59px;font-size:9.6px;color:#5a5a5a;font-weight:normal;font-style:normal;font-family:'Liberation Sans',sans-serif;">Maintenance</div>
<svg class="a" style="left:26.0px;top:385.99px;" width="7" height="5" viewBox="0 0 7 5"><path d="M0.5 0.5h6L3.5 4z" stroke="#aaa" fill="none"/></svg>
<svg class="a" style="left:39.5px;top:380.99px;" width="12" height="11" viewBox="0 0 12 11"><rect x="0.75" y="0.75" width="10.5" height="9.5" fill="#f6d4f2" stroke="#c6aa86" stroke-width="1.5"/><rect x="3" y="3" width="6" height="5" fill="#e8b4e8"/></svg>
<div class="t" style="left:58px;top:383.26px;font-size:9.6px;color:#5a5a5a;font-weight:normal;font-style:normal;font-family:'Liberation Sans',sans-serif;">Publishing</div>
<svg class="a" style="left:44.5px;top:402.66px;" width="7" height="5" viewBox="0 0 7 5"><path d="M0.5 0.5h6L3.5 4z" stroke="#aaa" fill="none"/></svg>
<svg class="a" style="left:58px;top:397.16px;" width="13" height="11" viewBox="0 0 13 11"><path d="M0.75 1.75v8.5h11.5v-7h-6l-1.3-1.5h-4.2z" fill="#fdf6ea" stroke="#c9a27a" stroke-width="1.3"/><path d="M0.75 3.5h11.5" stroke="#c9a27a" stroke-width="1"/></svg>
<div class="t" style="left:76px;top:399.93px;font-size:9.6px;color:#5a5a5a;font-weight:normal;font-style:normal;font-family:'Liberation Sans',sans-serif;">Design Patterns</div>
<svg class="a" style="left:65.0px;top:417.83000000000004px;" width="4" height="7" viewBox="0 0 4 7"><path d="M0.5 0.5L3.5 3.5L0.5 6.5" stroke="#b4b4b4" fill="none" stroke-width=".9"/></svg>
<svg class="a" style="left:76px;top:416.83000000000004px;" width="14" height="5" viewBox="0 0 14 5"><circle cx="2" cy="2.5" r="1.8" fill="#6c8fd0"/><circle cx="7" cy="2.5" r="1.8" fill="#6c8fd0"/><circle cx="12" cy="2.5" r="1.8" fill="#6c8fd0"/></svg>
<div class="t" style="left:94px;top:416.60px;font-size:9.6px;color:#5a5a5a;font-weight:normal;font-style:normal;font-family:'Liberation Sans',sans-serif;">{ }</div>
<svg class="a" style="left:77px;top:431.0px;" width="13" height="13" viewBox="0 0 13 13"><rect x="0.5" y="0.5" width="6.5" height="4" rx="1" fill="#d0782a" stroke="#7a2a10"/><path d="M2.5 4.5v7.5h3.5" stroke="#6a6a7a" fill="none"/><rect x="2.8" y="6" width="2.5" height="2" fill="#f4d8d8"/><rect x="2.8" y="9" width="2.5" height="2" fill="#f4d8d8"/><rect x="6" y="5" width="6.5" height="7.5" fill="#b03a18" stroke="#6a2008"/><rect x="7.2" y="6.2" width="2" height="2" fill="#e89050"/><rect x="10" y="6.2" width="1.8" height="2" fill="#f4b888"/><rect x="7.2" y="9.4" width="2" height="2" fill="#d86048"/><rect x="10" y="9.4" width="1.8" height="2" fill="#f8a898"/></svg>
<div class="t" style="left:94.5px;top:433.27px;font-size:9.6px;color:#5a5a5a;font-weight:normal;font-style:normal;font-family:'Liberation Sans',sans-serif;">Design Patterns</div>
<svg class="a" style="left:65.0px;top:451.17px;" width="4" height="7" viewBox="0 0 4 7"><path d="M0.5 0.5L3.5 3.5L0.5 6.5" stroke="#b4b4b4" fill="none" stroke-width=".9"/></svg>
<svg class="a" style="left:78px;top:447.67px;" width="10" height="13" viewBox="0 0 10 13"><rect x="0.5" y="0.5" width="9" height="12" fill="#eef0ff" stroke="#6c7ac8"/><path d="M0.5 3.5h9M0.5 7.5h9" stroke="#6c7ac8"/><rect x="3" y="9" width="4" height="2" fill="#444"/></svg>
<div class="t" style="left:94.5px;top:449.94px;font-size:9.6px;color:#5a5a5a;font-weight:normal;font-style:normal;font-family:'Liberation Sans',sans-serif;">Component</div>
<svg class="a" style="left:78px;top:464.34000000000003px;" width="10" height="13" viewBox="0 0 10 13"><rect x="0.5" y="0.5" width="9" height="12" fill="#eef0ff" stroke="#6c7ac8"/><path d="M0.5 3.5h9M0.5 7.5h9" stroke="#6c7ac8"/><rect x="3" y="9" width="4" height="2" fill="#444"/></svg>
<div class="t" style="left:94.5px;top:466.61px;font-size:9.6px;color:#5a5a5a;font-weight:normal;font-style:normal;font-family:'Liberation Sans',sans-serif;">ConcreteComponent</div>
<svg class="a" style="left:65.0px;top:484.51000000000005px;" width="4" height="7" viewBox="0 0 4 7"><path d="M0.5 0.5L3.5 3.5L0.5 6.5" stroke="#b4b4b4" fill="none" stroke-width=".9"/></svg>
<svg class="a" style="left:78px;top:481.01000000000005px;" width="10" height="13" viewBox="0 0 10 13"><rect x="0.5" y="0.5" width="9" height="12" fill="#eef0ff" stroke="#6c7ac8"/><path d="M0.5 3.5h9M0.5 7.5h9" stroke="#6c7ac8"/><rect x="3" y="9" width="4" height="2" fill="#444"/></svg>
<div class="t" style="left:94.5px;top:483.28px;font-size:9.6px;color:#5a5a5a;font-weight:normal;font-style:normal;font-family:'Liberation Sans',sans-serif;">ConcreteDecoratorA</div>
<svg class="a" style="left:65.0px;top:501.18000000000006px;" width="4" height="7" viewBox="0 0 4 7"><path d="M0.5 0.5L3.5 3.5L0.5 6.5" stroke="#b4b4b4" fill="none" stroke-width=".9"/></svg>
<svg class="a" style="left:78px;top:497.68000000000006px;" width="10" height="13" viewBox="0 0 10 13"><rect x="0.5" y="0.5" width="9" height="12" fill="#eef0ff" stroke="#6c7ac8"/><path d="M0.5 3.5h9M0.5 7.5h9" stroke="#6c7ac8"/><rect x="3" y="9" width="4" height="2" fill="#444"/></svg>
<div class="t" style="left:94.5px;top:499.95px;font-size:9.6px;color:#5a5a5a;font-weight:normal;font-style:normal;font-family:'Liberation Sans',sans-serif;">ConcreteDecoratorB</div>
<svg class="a" style="left:78px;top:514.35px;" width="10" height="13" viewBox="0 0 10 13"><rect x="0.5" y="0.5" width="9" height="12" fill="#eef0ff" stroke="#6c7ac8"/><path d="M0.5 3.5h9M0.5 7.5h9" stroke="#6c7ac8"/><rect x="3" y="9" width="4" height="2" fill="#444"/></svg>
<div class="t" style="left:94.5px;top:516.62px;font-size:9.6px;color:#5a5a5a;font-weight:normal;font-style:normal;font-family:'Liberation Sans',sans-serif;">Decorator</div>
<svg class="a" style="left:46.5px;top:534.52px;" width="4" height="7" viewBox="0 0 4 7"><path d="M0.5 0.5L3.5 3.5L0.5 6.5" stroke="#b4b4b4" fill="none" stroke-width=".9"/></svg>
<svg class="a" style="left:58px;top:530.52px;" width="13" height="11" viewBox="0 0 13 11"><path d="M0.75 1.75v8.5h11.5v-7h-6l-1.3-1.5h-4.2z" fill="#fdf6ea" stroke="#c9a27a" stroke-width="1.3"/><path d="M0.75 3.5h11.5" stroke="#c9a27a" stroke-width="1"/></svg>
<div class="t" style="left:76px;top:533.29px;font-size:9.6px;color:#5a5a5a;font-weight:normal;font-style:normal;font-family:'Liberation Sans',sans-serif;">Documentation</div>
<svg class="a" style="left:46.5px;top:551.19px;" width="4" height="7" viewBox="0 0 4 7"><path d="M0.5 0.5L3.5 3.5L0.5 6.5" stroke="#b4b4b4" fill="none" stroke-width=".9"/></svg>
<svg class="a" style="left:58px;top:547.19px;" width="13" height="11" viewBox="0 0 13 11"><path d="M0.75 1.75v8.5h11.5v-7h-6l-1.3-1.5h-4.2z" fill="#fdf6ea" stroke="#c9a27a" stroke-width="1.3"/><path d="M0.75 3.5h11.5" stroke="#c9a27a" stroke-width="1"/></svg>
<div class="t" style="left:76px;top:549.96px;font-size:9.6px;color:#5a5a5a;font-weight:normal;font-style:normal;font-family:'Liberation Sans',sans-serif;">Model Exchange</div>
<svg class="a" style="left:46.5px;top:567.8600000000001px;" width="4" height="7" viewBox="0 0 4 7"><path d="M0.5 0.5L3.5 3.5L0.5 6.5" stroke="#b4b4b4" fill="none" stroke-width=".9"/></svg>
<svg class="a" style="left:58px;top:563.8600000000001px;" width="13" height="11" viewBox="0 0 13 11"><path d="M0.75 1.75v8.5h11.5v-7h-6l-1.3-1.5h-4.2z" fill="#fdf6ea" stroke="#c9a27a" stroke-width="1.3"/><path d="M0.75 3.5h11.5" stroke="#c9a27a" stroke-width="1"/></svg>
<div class="t" style="left:76px;top:566.63px;font-size:9.6px;color:#5a5a5a;font-weight:normal;font-style:normal;font-family:'Liberation Sans',sans-serif;">MDG Technologies</div>
<svg class="a" style="left:46.5px;top:584.53px;" width="4" height="7" viewBox="0 0 4 7"><path d="M0.5 0.5L3.5 3.5L0.5 6.5" stroke="#b4b4b4" fill="none" stroke-width=".9"/></svg>
<svg class="a" style="left:58px;top:580.53px;" width="13" height="11" viewBox="0 0 13 11"><path d="M0.75 1.75v8.5h11.5v-7h-6l-1.3-1.5h-4.2z" fill="#fdf6ea" stroke="#c9a27a" stroke-width="1.3"/><path d="M0.75 3.5h11.5" stroke="#c9a27a" stroke-width="1"/></svg>
<div class="t" style="left:76px;top:583.30px;font-size:9.6px;color:#5a5a5a;font-weight:normal;font-style:normal;font-family:'Liberation Sans',sans-serif;">Help Modeling</div>
<svg class="a" style="left:46.5px;top:601.2px;" width="4" height="7" viewBox="0 0 4 7"><path d="M0.5 0.5L3.5 3.5L0.5 6.5" stroke="#b4b4b4" fill="none" stroke-width=".9"/></svg>
<svg class="a" style="left:57px;top:600.2px;" width="14" height="5" viewBox="0 0 14 5"><circle cx="2" cy="2.5" r="1.8" fill="#6c8fd0"/><circle cx="7" cy="2.5" r="1.8" fill="#6c8fd0"/><circle cx="12" cy="2.5" r="1.8" fill="#6c8fd0"/></svg>
<div class="t" style="left:76px;top:599.97px;font-size:9.6px;color:#5a5a5a;font-weight:normal;font-style:normal;font-family:'Liberation Sans',sans-serif;">{ }</div>
<svg class="a" style="left:58px;top:614.3700000000001px;" width="13" height="13" viewBox="0 0 13 13"><rect x="0.5" y="0.5" width="6.5" height="4" rx="1" fill="#d0782a" stroke="#7a2a10"/><path d="M2.5 4.5v7.5h3.5" stroke="#6a6a7a" fill="none"/><rect x="2.8" y="6" width="2.5" height="2" fill="#f4d8d8"/><rect x="2.8" y="9" width="2.5" height="2" fill="#f4d8d8"/><rect x="6" y="5" width="6.5" height="7.5" fill="#b03a18" stroke="#6a2008"/><rect x="7.2" y="6.2" width="2" height="2" fill="#e89050"/><rect x="10" y="6.2" width="1.8" height="2" fill="#f4b888"/><rect x="7.2" y="9.4" width="2" height="2" fill="#d86048"/><rect x="10" y="9.4" width="1.8" height="2" fill="#f8a898"/></svg>
<div class="t" style="left:76.5px;top:616.64px;font-size:9.6px;color:#5a5a5a;font-weight:normal;font-style:normal;font-family:'Liberation Sans',sans-serif;">Publishing</div>
<svg class="a" style="left:28.0px;top:634.54px;" width="4" height="7" viewBox="0 0 4 7"><path d="M0.5 0.5L3.5 3.5L0.5 6.5" stroke="#b4b4b4" fill="none" stroke-width=".9"/></svg>
<svg class="a" style="left:39.5px;top:631.04px;" width="12" height="11" viewBox="0 0 12 11"><rect x="0.75" y="0.75" width="10.5" height="9.5" fill="#f6d4f2" stroke="#c6aa86" stroke-width="1.5"/><rect x="3" y="3" width="6" height="5" fill="#e8b4e8"/></svg>
<div class="t" style="left:58px;top:633.31px;font-size:9.6px;color:#5a5a5a;font-weight:normal;font-style:normal;font-family:'Liberation Sans',sans-serif;">Reporting</div>
<svg class="a" style="left:28.0px;top:651.21px;" width="4" height="7" viewBox="0 0 4 7"><path d="M0.5 0.5L3.5 3.5L0.5 6.5" stroke="#b4b4b4" fill="none" stroke-width=".9"/></svg>
<svg class="a" style="left:39.5px;top:647.71px;" width="12" height="11" viewBox="0 0 12 11"><rect x="0.75" y="0.75" width="10.5" height="9.5" fill="#f6d4f2" stroke="#c6aa86" stroke-width="1.5"/><rect x="3" y="3" width="6" height="5" fill="#e8b4e8"/></svg>
<div class="t" style="left:58px;top:649.98px;font-size:9.6px;color:#5a5a5a;font-weight:normal;font-style:normal;font-family:'Liberation Sans',sans-serif;">Database Modeling</div>
<svg class="a" style="left:28.0px;top:667.8800000000001px;" width="4" height="7" viewBox="0 0 4 7"><path d="M0.5 0.5L3.5 3.5L0.5 6.5" stroke="#b4b4b4" fill="none" stroke-width=".9"/></svg>
<svg class="a" style="left:39.5px;top:664.3800000000001px;" width="12" height="11" viewBox="0 0 12 11"><rect x="0.75" y="0.75" width="10.5" height="9.5" fill="#f6d4f2" stroke="#c6aa86" stroke-width="1.5"/><rect x="3" y="3" width="6" height="5" fill="#e8b4e8"/></svg>
<div class="t" style="left:58px;top:666.65px;font-size:9.6px;color:#5a5a5a;font-weight:normal;font-style:normal;font-family:'Liberation Sans',sans-serif;">Schema Modeling</div>
<svg class="a" style="left:28.0px;top:684.5500000000001px;" width="4" height="7" viewBox="0 0 4 7"><path d="M0.5 0.5L3.5 3.5L0.5 6.5" stroke="#b4b4b4" fill="none" stroke-width=".9"/></svg>
<svg class="a" style="left:39.5px;top:681.0500000000001px;" width="12" height="11" viewBox="0 0 12 11"><rect x="0.75" y="0.75" width="10.5" height="9.5" fill="#f6d4f2" stroke="#c6aa86" stroke-width="1.5"/><rect x="3" y="3" width="6" height="5" fill="#e8b4e8"/></svg>
<div class="t" style="left:58px;top:683.32px;font-size:9.6px;color:#5a5a5a;font-weight:normal;font-style:normal;font-family:'Liberation Sans',sans-serif;">Geospatial Modeling</div>
<svg class="a" style="left:28.0px;top:701.22px;" width="4" height="7" viewBox="0 0 4 7"><path d="M0.5 0.5L3.5 3.5L0.5 6.5" stroke="#b4b4b4" fill="none" stroke-width=".9"/></svg>
<svg class="a" style="left:39.5px;top:697.72px;" width="12" height="11" viewBox="0 0 12 11"><rect x="0.75" y="0.75" width="10.5" height="9.5" fill="#f6d4f2" stroke="#c6aa86" stroke-width="1.5"/><rect x="3" y="3" width="6" height="5" fill="#e8b4e8"/></svg>
<div class="t" style="left:58px;top:699.99px;font-size:9.6px;color:#5a5a5a;font-weight:normal;font-style:normal;font-family:'Liberation Sans',sans-serif;">Systems Engineering</div>
<svg class="a" style="left:28.0px;top:717.8900000000001px;" width="4" height="7" viewBox="0 0 4 7"><path d="M0.5 0.5L3.5 3.5L0.5 6.5" stroke="#b4b4b4" fill="none" stroke-width=".9"/></svg>
<svg class="a" style="left:39.5px;top:714.3900000000001px;" width="12" height="11" viewBox="0 0 12 11"><rect x="0.75" y="0.75" width="10.5" height="9.5" fill="#f6d4f2" stroke="#c6aa86" stroke-width="1.5"/><rect x="3" y="3" width="6" height="5" fill="#e8b4e8"/></svg>
<div class="t" style="left:58px;top:716.66px;font-size:9.6px;color:#5a5a5a;font-weight:normal;font-style:normal;font-family:'Liberation Sans',sans-serif;">Visual Execution Analysis</div>
<svg class="a" style="left:28.0px;top:734.5600000000001px;" width="4" height="7" viewBox="0 0 4 7"><path d="M0.5 0.5L3.5 3.5L0.5 6.5" stroke="#b4b4b4" fill="none" stroke-width=".9"/></svg>
<svg class="a" style="left:39.5px;top:731.0600000000001px;" width="12" height="11" viewBox="0 0 12 11"><rect x="0.75" y="0.75" width="10.5" height="9.5" fill="#f6d4f2" stroke="#c6aa86" stroke-width="1.5"/><rect x="3" y="3" width="6" height="5" fill="#e8b4e8"/></svg>
<div class="t" style="left:58px;top:733.33px;font-size:9.6px;color:#5a5a5a;font-weight:normal;font-style:normal;font-family:'Liberation Sans',sans-serif;">Software Engineering</div>
<svg class="a" style="left:28.0px;top:751.23px;" width="4" height="7" viewBox="0 0 4 7"><path d="M0.5 0.5L3.5 3.5L0.5 6.5" stroke="#b4b4b4" fill="none" stroke-width=".9"/></svg>
<svg class="a" style="left:39.5px;top:747.73px;" width="12" height="11" viewBox="0 0 12 11"><rect x="0.75" y="0.75" width="10.5" height="9.5" fill="#f6d4f2" stroke="#c6aa86" stroke-width="1.5"/><rect x="3" y="3" width="6" height="5" fill="#e8b4e8"/></svg>
<div class="t" style="left:58px;top:750.00px;font-size:9.6px;color:#5a5a5a;font-weight:normal;font-style:normal;font-family:'Liberation Sans',sans-serif;">Model Transformation</div>
<svg class="a" style="left:28.0px;top:767.9000000000001px;" width="4" height="7" viewBox="0 0 4 7"><path d="M0.5 0.5L3.5 3.5L0.5 6.5" stroke="#b4b4b4" fill="none" stroke-width=".9"/></svg>
<svg class="a" style="left:39.5px;top:764.4000000000001px;" width="12" height="11" viewBox="0 0 12 11"><rect x="0.75" y="0.75" width="10.5" height="9.5" fill="#f6d4f2" stroke="#c6aa86" stroke-width="1.5"/><rect x="3" y="3" width="6" height="5" fill="#e8b4e8"/></svg>
<div class="t" style="left:58px;top:766.67px;font-size:9.6px;color:#5a5a5a;font-weight:normal;font-style:normal;font-family:'Liberation Sans',sans-serif;">Model Simulation</div>
<svg class="a" style="left:28.0px;top:784.5700000000002px;" width="4" height="7" viewBox="0 0 4 7"><path d="M0.5 0.5L3.5 3.5L0.5 6.5" stroke="#b4b4b4" fill="none" stroke-width=".9"/></svg>
<svg class="a" style="left:39.5px;top:781.0700000000002px;" width="12" height="11" viewBox="0 0 12 11"><rect x="0.75" y="0.75" width="10.5" height="9.5" fill="#f6d4f2" stroke="#c6aa86" stroke-width="1.5"/><rect x="3" y="3" width="6" height="5" fill="#e8b4e8"/></svg>
<div class="t" style="left:58px;top:783.34px;font-size:9.6px;color:#5a5a5a;font-weight:normal;font-style:normal;font-family:'Liberation Sans',sans-serif;">Model Based Add-Ins</div>
<svg class="a" style="left:28.0px;top:801.24px;" width="4" height="7" viewBox="0 0 4 7"><path d="M0.5 0.5L3.5 3.5L0.5 6.5" stroke="#b4b4b4" fill="none" stroke-width=".9"/></svg>
<svg class="a" style="left:39.5px;top:797.74px;" width="12" height="11" viewBox="0 0 12 11"><rect x="0.75" y="0.75" width="10.5" height="9.5" fill="#f6d4f2" stroke="#c6aa86" stroke-width="1.5"/><rect x="3" y="3" width="6" height="5" fill="#e8b4e8"/></svg>
<div class="t" style="left:58px;top:800.01px;font-size:9.6px;color:#5a5a5a;font-weight:normal;font-style:normal;font-family:'Liberation Sans',sans-serif;">Data Miner</div>
<svg class="a" style="left:28.0px;top:817.9100000000001px;" width="4" height="7" viewBox="0 0 4 7"><path d="M0.5 0.5L3.5 3.5L0.5 6.5" stroke="#b4b4b4" fill="none" stroke-width=".9"/></svg>
<svg class="a" style="left:39.5px;top:814.4100000000001px;" width="12" height="11" viewBox="0 0 12 11"><rect x="0.75" y="0.75" width="10.5" height="9.5" fill="#f6d4f2" stroke="#c6aa86" stroke-width="1.5"/><rect x="3" y="3" width="6" height="5" fill="#e8b4e8"/></svg>
<div class="t" style="left:58px;top:816.68px;font-size:9.6px;color:#5a5a5a;font-weight:normal;font-style:normal;font-family:'Liberation Sans',sans-serif;">Pro Cloud Server</div>
<div class="a" style="left:230px;top:181px;width:617px;height:681px;background:#f0f0f0;"></div>
<div class="a" style="left:230px;top:181px;width:617px;height:22px;background:#efefef;"></div>
<div class="a" style="left:230px;top:203px;width:617px;height:1px;background:#e2e2e2;"></div>
<svg class="a" style="left:234px;top:188px;" width="10" height="9" viewBox="0 0 10 9"><path d="M1 1l3.5 3.5L1 8M5 1l3.5 3.5L5 8" stroke="#333" stroke-width="1.6" fill="none"/></svg>
<svg class="a" style="left:263px;top:185px;" width="13" height="14" viewBox="0 0 13 14"><rect x="0.5" y="0.5" width="6.5" height="4" rx="1" fill="#d0782a" stroke="#7a2a10"/><path d="M2.5 4.5v7.5h3.5" stroke="#6a6a7a" fill="none"/><rect x="2.8" y="6" width="2.5" height="2" fill="#f4d8d8"/><rect x="2.8" y="9" width="2.5" height="2" fill="#f4d8d8"/><rect x="6" y="5" width="6.5" height="7.5" fill="#b03a18" stroke="#6a2008"/><rect x="7.2" y="6.2" width="2" height="2" fill="#e89050"/><rect x="10" y="6.2" width="1.8" height="2" fill="#f4b888"/><rect x="7.2" y="9.4" width="2" height="2" fill="#d86048"/><rect x="10" y="9.4" width="1.8" height="2" fill="#f8a898"/></svg>
<div class="t" style="left:303px;top:188.97px;font-size:8.9px;color:#9a9a9a;font-weight:normal;font-style:normal;font-family:'Liberation Sans',sans-serif;">Design Patterns,&nbsp; Custom Diagram</div>
<svg class="a" style="left:790px;top:187px;" width="9" height="9" viewBox="0 0 9 9"><path d="M8 1L4.5 4.5L8 8M4.5 1L1 4.5L4.5 8" stroke="#333" stroke-width="1.5" fill="none"/></svg>
<svg class="a" style="left:814px;top:191px;" width="8" height="4" viewBox="0 0 8 4"><path d="M0 0h8L4 4z" fill="#333"/></svg>
<svg class="a" style="left:832.5px;top:188.5px;" width="7" height="7" viewBox="0 0 7 7"><path d="M0.8 0.8l5.4 5.4M6.2 0.8l-5.4 5.4" stroke="#333" stroke-width="1.6"/></svg>
<div class="a" style="left:230px;top:204px;width:617px;height:23px;background:#eeeeee;"></div>
<div class="a" style="left:230px;top:204px;width:153px;height:23px;background:#fbfbfb;"></div>
<svg class="a" style="left:234px;top:209px;opacity:.85" width="13" height="13" viewBox="0 0 13 13"><rect x="0.5" y="0.5" width="6.5" height="4" rx="1" fill="#d89060" stroke="#7a2a10"/><path d="M2.5 4.5v7.5h3.5" stroke="#6a6a7a" fill="none"/><rect x="2.8" y="6" width="2.5" height="2" fill="#f4d8d8"/><rect x="2.8" y="9" width="2.5" height="2" fill="#f4d8d8"/><rect x="6" y="5" width="6.5" height="7.5" fill="#d87060" stroke="#6a2008"/><rect x="7.2" y="6.2" width="2" height="2" fill="#e89050"/><rect x="10" y="6.2" width="1.8" height="2" fill="#f4b888"/><rect x="7.2" y="9.4" width="2" height="2" fill="#d86048"/><rect x="10" y="9.4" width="1.8" height="2" fill="#f8a898"/></svg>
<div class="t" style="left:249px;top:208.90px;font-size:15px;color:#555;font-weight:normal;font-style:normal;font-family:'Liberation Sans',sans-serif;">Design Patterns</div>
<svg class="a" style="left:369px;top:213px;" width="7" height="7" viewBox="0 0 7 7"><path d="M0.5 0.5l6 6M6.5 0.5l-6 6" stroke="#666" stroke-width="1.1"/></svg>
<svg class="a" style="left:817px;top:211px;" width="5" height="8" viewBox="0 0 5 8"><path d="M4.5 0.5v7L0.5 4z" fill="#fff" stroke="#999"/></svg>
<svg class="a" style="left:834px;top:211px;" width="5" height="8" viewBox="0 0 5 8"><path d="M0.5 0.5v7L4.5 4z" fill="#fff" stroke="#999"/></svg>
<div class="a" style="left:230px;top:227px;width:603px;height:619px;background:#ffffff;"></div>
<div class="a" style="left:833px;top:227px;width:14px;height:619px;background:#f2f2f2;"></div>
<svg class="a" style="left:835px;top:232px;" width="8" height="5" viewBox="0 0 8 5"><path d="M0 5L4 0L8 5z" fill="#666"/></svg>
<div class="a" style="left:836px;top:347px;width:5px;height:253px;background:#cdcdcd;border-radius:2px"></div>
<svg class="a" style="left:835px;top:837px;" width="8" height="5" viewBox="0 0 8 5"><path d="M0 0h8L4 5z" fill="#666"/></svg>
<div class="a" style="left:230px;top:846px;width:617px;height:16px;background:#f0f0f0;"></div>
<svg class="a" style="left:235px;top:850px;" width="5" height="8" viewBox="0 0 5 8"><path d="M5 0v8L0 4z" fill="#444"/></svg>
<div class="a" style="left:460px;top:851px;width:185px;height:6px;background:#c8c8c8;border-radius:3px"></div>
<svg class="a" style="left:822px;top:850px;" width="5" height="8" viewBox="0 0 5 8"><path d="M0 0v8l5-4z" fill="#444"/></svg>
<div class="a" style="left:355px;top:260px;width:118px;height:92px;background:#dcdcdc;filter:blur(0.6px)"></div>
<div class="a" style="left:352px;top:256px;width:118px;height:92px;background:linear-gradient(100deg,#fffdfb 0%,#fbf6f1 45%,#f3e6dc 100%);border:1.2px solid #8f8f8f"></div>
<div class="a" style="left:352px;top:292px;width:118px;height:1.3px;background:#9a9a9a;"></div>
<div class="a" style="left:259px;top:446px;width:141px;height:93px;background:#dcdcdc;filter:blur(0.6px)"></div>
<div class="a" style="left:256px;top:442px;width:141px;height:93px;background:linear-gradient(100deg,#fffdfb 0%,#fbf6f1 45%,#f3e6dc 100%);border:1.2px solid #8f8f8f"></div>
<div class="a" style="left:455px;top:452px;width:119px;height:93px;background:#dcdcdc;filter:blur(0.6px)"></div>
<div class="a" style="left:452px;top:448px;width:119px;height:93px;background:linear-gradient(100deg,#fffdfb 0%,#fbf6f1 45%,#f3e6dc 100%);border:1.2px solid #8f8f8f"></div>
<div class="a" style="left:343px;top:631px;width:141px;height:91px;background:#dcdcdc;filter:blur(0.6px)"></div>
<div class="a" style="left:340px;top:627px;width:141px;height:91px;background:linear-gradient(100deg,#fffdfb 0%,#fbf6f1 45%,#f3e6dc 100%);border:1.2px solid #8f8f8f"></div>
<div class="a" style="left:340px;top:661px;width:141px;height:1.3px;background:#9a9a9a;"></div>
<div class="a" style="left:585px;top:631px;width:217px;height:119px;background:#dcdcdc;filter:blur(0.6px)"></div>
<div class="a" style="left:582px;top:627px;width:217px;height:119px;background:linear-gradient(100deg,#fffdfb 0%,#fbf6f1 45%,#f3e6dc 100%);border:1.2px solid #8f8f8f"></div>
<div class="a" style="left:582px;top:661px;width:217px;height:1.3px;background:#9a9a9a;"></div>
<svg class="a" style="left:0;top:0" width="1600" height="900" viewBox="0 0 1600 900"><g stroke="#333" stroke-width="1.3" fill="none">
<path d="M411 370V414M325.5 414H511M325.5 414V442M511 414V448"/>
<path d="M511 562V606M410 606H691M410 606V627M691 606V627"/>
<path d="M597 492H620V302.5H471"/>
<path d="M483 293L471 302.5L483 312"/>
</g>
<path d="M411 349L403 370H419z" fill="#efefef" stroke="#333" stroke-width="1.3"/>
<path d="M511 541L503 562H519z" fill="#efefef" stroke="#333" stroke-width="1.3"/>
<path d="M571 492L584 485L597 492L584 499z" fill="#f2f2f2" stroke="#333" stroke-width="1.3"/>
</svg>
<div class="t" style="left:411px;top:270.57px;font-size:11.5px;color:#555;font-weight:bold;font-style:italic;font-family:'Liberation Sans',sans-serif;transform:translateX(-50%);">Component</div>
<div class="t" style="left:359px;top:300.69px;font-size:11px;color:#555;font-weight:normal;font-style:normal;font-family:'Liberation Sans',sans-serif;">+</div>
<div class="t" style="left:381.5px;top:299.67px;font-size:12.2px;color:#5d6159;font-weight:normal;font-style:italic;font-family:'Liberation Sans',sans-serif;">Operation()</div>
<div class="t" style="left:325.5px;top:457.88px;font-size:11.6px;color:#555;font-weight:bold;font-style:normal;font-family:'Liberation Sans',sans-serif;transform:translateX(-50%);">ConcreteComponent</div>
<div class="t" style="left:511px;top:462.88px;font-size:11.6px;color:#555;font-weight:bold;font-style:italic;font-family:'Liberation Sans',sans-serif;transform:translateX(-50%);">Decorator</div>
<div class="t" style="left:604px;top:503.53px;font-size:12.6px;color:#707070;font-weight:normal;font-style:normal;font-family:'Liberation Sans',sans-serif;">-component</div>
<div class="t" style="left:410.5px;top:640.68px;font-size:11.6px;color:#555;font-weight:bold;font-style:normal;font-family:'Liberation Sans',sans-serif;transform:translateX(-50%);">ConcreteDecoratorA</div>
<div class="t" style="left:347px;top:670.19px;font-size:11px;color:#666;font-weight:normal;font-style:normal;font-family:'Liberation Sans',sans-serif;">-</div>
<div class="t" style="left:369.5px;top:669.09px;font-size:12.3px;color:#6a5a5a;font-weight:normal;font-style:normal;font-family:'Liberation Sans',sans-serif;">addedState</div>
<div class="t" style="left:690.5px;top:640.68px;font-size:11.6px;color:#555;font-weight:bold;font-style:normal;font-family:'Liberation Sans',sans-serif;transform:translateX(-50%);">ConcreteDecoratorB</div>
<div class="t" style="left:589px;top:670.19px;font-size:11px;color:#555;font-weight:normal;font-style:normal;font-family:'Liberation Sans',sans-serif;">+</div>
<div class="t" style="left:611px;top:669.09px;font-size:12.3px;color:#5d6159;font-weight:normal;font-style:normal;font-family:'Liberation Sans',sans-serif;">AddedBehavior()</div>
<div class="a" style="left:847px;top:181px;width:753px;height:681px;background:#f0f0f0;"></div>
<div class="a" style="left:846px;top:181px;width:1px;height:681px;background:#d8d8d8;"></div>
<div class="t" style="left:853px;top:187.46px;font-size:15.4px;color:#4a4a4a;font-weight:normal;font-style:normal;font-family:'Liberation Sans',sans-serif;">sparx-queries.mfql</div>
<svg class="a" style="left:1558px;top:192px;" width="7" height="4" viewBox="0 0 7 4"><path d="M0 0h7L3.5 4z" fill="#666"/></svg>
<svg class="a" style="left:1574px;top:189px;" width="6" height="9" viewBox="0 0 6 9"><path d="M1.5 0.5h3v4.5h-3z M0 5.5h6 M3 5.5v3" stroke="#888" fill="none"/></svg>
<svg class="a" style="left:1590px;top:190px;" width="7" height="7" viewBox="0 0 7 7"><path d="M1 1l5.5 5.5M6.5 1L1 6.5" stroke="#555" stroke-width="1.3"/></svg>
<div class="t" style="left:851px;top:209.59px;font-size:8.75px;color:#8f8f8f;font-weight:normal;font-style:normal;font-family:'Liberation Sans',sans-serif;">C:\Program Files\Sparx Systems\EA\Config\codeminer\sparx-queries.mfql</div>
<div class="a" style="left:847px;top:219px;width:323px;height:21px;background:#f7f7f7;"></div>
<div class="a" style="left:0;top:0;width:1600px;height:900px;opacity:.8">
<div class="a" style="left:852px;top:221px;width:20px;height:17px;background:#e4e4e4;border-radius:3px;border:1px solid #d6d6d6"></div>
<div class="a" style="left:874px;top:221px;width:20px;height:17px;background:#e4e4e4;border-radius:3px;border:1px solid #d6d6d6"></div>
<svg class="a" style="left:855px;top:223px;" width="14" height="13" viewBox="0 0 14 13"><rect x="0.5" y="1.5" width="6" height="5" fill="#fff" stroke="#5a5ad8" stroke-width="1.2"/><path d="M10 1l2.5 3h-5z" fill="#2e9a5a"/><rect x="8.5" y="8.5" width="4" height="4" fill="#b03060"/><path d="M10.5 4v4" stroke="#555"/></svg>
<svg class="a" style="left:877px;top:223px;" width="14" height="13" viewBox="0 0 14 13"><path d="M4 1h9M4 5h9M4 9h9M4 12.5h9" stroke="#777"/><path d="M1.5 0.5v3M1 4.5h1.5v2h-1v2h1.5M1 10h1.5v2.5H1" stroke="#555" fill="none" stroke-width=".8"/></svg>
<svg class="a" style="left:898px;top:223px;" width="14" height="13" viewBox="0 0 14 13"><rect x="0.5" y="3.5" width="12" height="9" fill="#e8e8e8" stroke="#999"/><path d="M0.5 5L9 0.5L13 3L4 7z" fill="#8fb040"/><rect x="3" y="8" width="5" height="3" fill="#888"/></svg>
<svg class="a" style="left:915px;top:229px;" width="5" height="3" viewBox="0 0 5 3"><path d="M0 0h5L2.5 3z" fill="#555"/></svg>
<div class="a" style="left:930px;top:221px;width:1px;height:18px;background:#e4e4e4;"></div>
<svg class="a" style="left:937px;top:223px;" width="12" height="14" viewBox="0 0 12 14"><path d="M0.5 0.5h8l3 3v10h-11z" fill="#e8eaf0" stroke="#aab"/><path d="M3 10l5-6 2 1.5-5 6H3z" fill="#5a8fd0"/></svg>
<svg class="a" style="left:954px;top:229px;" width="5" height="3" viewBox="0 0 5 3"><path d="M0 0h5L2.5 3z" fill="#555"/></svg>
<svg class="a" style="left:969px;top:223px;" width="14" height="14" viewBox="0 0 14 14"><path d="M0.5 0.5h8l3 3v10h-11z" fill="#e8eaf0" stroke="#aab"/><path d="M11.5 3v8M9 9l2.5 3 2.5-3" stroke="#2e9a5a" fill="none" stroke-width="1.3"/></svg>
<svg class="a" style="left:990px;top:222px;" width="14" height="15" viewBox="0 0 14 15"><path d="M1.5 1.5h8l3 3v10h-11z" fill="#fff" stroke="#999"/><rect x="0" y="0" width="6" height="5" fill="#6a9ad8"/><rect x="3" y="6" width="7" height="6" fill="#c8a0d8"/></svg>
<div class="a" style="left:1010px;top:221px;width:1px;height:18px;background:#e4e4e4;"></div>
<svg class="a" style="left:1017px;top:222px;" width="17" height="15" viewBox="0 0 17 15"><path d="M1 2l4-2 2 3z" fill="#f2b040"/><rect x="4" y="5" width="5" height="8" rx="2" fill="#444"/><rect x="10" y="5" width="5" height="8" rx="2" fill="#444"/><rect x="7" y="6" width="4" height="3" fill="#666"/></svg>
<svg class="a" style="left:1039px;top:222px;" width="15" height="15" viewBox="0 0 15 15"><path d="M0.5 0.5h10l3 3v11h-13z" fill="#f0f0f0" stroke="#999"/><circle cx="6" cy="6" r="3.5" fill="#9ab8e0" stroke="#3a6aa8"/><path d="M8 11h5v3H8z" fill="#e07030"/></svg>
<svg class="a" style="left:1059px;top:222px;" width="15" height="15" viewBox="0 0 15 15"><path d="M0.5 0.5h10l3 3v11h-13z" fill="#f0f0f0" stroke="#999"/><circle cx="6" cy="6" r="3.5" fill="#9ab8e0" stroke="#3a6aa8"/><path d="M9 10l4 2-4 2z" fill="#e0a030"/></svg>
<div class="a" style="left:1081px;top:221px;width:1px;height:18px;background:#e4e4e4;"></div>
<svg class="a" style="left:1088px;top:222px;" width="16" height="15" viewBox="0 0 16 15"><circle cx="5" cy="4" r="3.2" fill="#f2d050" stroke="#8a8a30"/><rect x="8" y="7.5" width="7" height="7" fill="#fff" stroke="#999"/><path d="M1 9l4 3M2 14h5" stroke="#5a7ad0" stroke-width="1.5"/></svg>
<svg class="a" style="left:1110px;top:223px;" width="13" height="13" viewBox="0 0 13 13"><path d="M1 4h5M3 2l-2 2 2 2" stroke="#4a8ad8" fill="none" stroke-width="1.4"/><path d="M9 1v11M7 1h4M7 12h4" stroke="#555" stroke-width="1.4"/></svg>
<svg class="a" style="left:1129px;top:222px;" width="16" height="15" viewBox="0 0 16 15"><rect x="0.5" y="0.5" width="15" height="13" fill="#fff" stroke="#888"/><rect x="0.5" y="0.5" width="15" height="2.5" fill="#5a7ab0"/><path d="M3 11l4-4 3 3 4-4" stroke="#2e9a5a" stroke-width="1.3" fill="none"/><circle cx="6" cy="12" r="1.5" fill="#c03030"/></svg>
<svg class="a" style="left:1150px;top:222px;" width="16" height="15" viewBox="0 0 16 15"><rect x="0.5" y="0.5" width="14" height="13" fill="#e8d8f0" stroke="#555" stroke-width="1.3"/><rect x="3" y="3" width="9" height="8" fill="#b070c0"/><path d="M9 6l5 4-5 3z" fill="#e8a0e8"/></svg>
</div>
<div class="a" style="left:850px;top:240px;width:317px;height:622px;background:#fcfcfc;"></div>
<div class="a" style="left:1167px;top:240px;width:3px;height:608px;background:#f3f3f3;"></div>
<svg class="a" style="left:857px;top:247px;" width="8" height="5" viewBox="0 0 8 5"><path d="M0.5 0.5h7L4 4.5z" stroke="#aaa" fill="none"/></svg>
<svg class="a" style="left:874px;top:242px;" width="14" height="12" viewBox="0 0 14 12"><path d="M0.75 2.25v9h12.5v-7.5h-6.5l-1.3-1.5h-4.7z" fill="#f6d9a8" stroke="#c9a27a" stroke-width="1.2"/></svg>
<div class="t" style="left:890.5px;top:245.24px;font-size:8.7px;color:#555;font-weight:normal;font-style:normal;font-family:'Liberation Sans',sans-serif;">cpp</div>
<div class="a" style="left:850px;top:474px;width:317px;height:16px;background:#f2f2f2;"></div>
<svg class="a" style="left:892px;top:259.5px;" width="14" height="11" viewBox="0 0 14 11"><circle cx="3" cy="5.5" r="2" fill="#d4d4d4"/><path d="M9.5 0.5L13 5.5L9.5 10.5L6 5.5z" fill="#9a6aac"/><path d="M9.5 0.5L13 5.5H6z" fill="#dcb8e8"/></svg>
<div class="t" style="left:909px;top:260.74px;font-size:8.7px;color:#555;font-weight:normal;font-style:normal;font-family:'Liberation Sans',sans-serif;">classHierarchy()</div>
<svg class="a" style="left:892px;top:276.17px;" width="14" height="11" viewBox="0 0 14 11"><circle cx="3" cy="5.5" r="2" fill="#d4d4d4"/><path d="M9.5 0.5L13 5.5L9.5 10.5L6 5.5z" fill="#9a6aac"/><path d="M9.5 0.5L13 5.5H6z" fill="#dcb8e8"/></svg>
<div class="t" style="left:909px;top:277.41px;font-size:8.7px;color:#555;font-weight:normal;font-style:normal;font-family:'Liberation Sans',sans-serif;">classReuse()</div>
<svg class="a" style="left:892px;top:292.84000000000003px;" width="14" height="11" viewBox="0 0 14 11"><circle cx="3" cy="5.5" r="2" fill="#d4d4d4"/><path d="M9.5 0.5L13 5.5L9.5 10.5L6 5.5z" fill="#9a6aac"/><path d="M9.5 0.5L13 5.5H6z" fill="#dcb8e8"/></svg>
<div class="t" style="left:909px;top:294.08px;font-size:8.7px;color:#555;font-weight:normal;font-style:normal;font-family:'Liberation Sans',sans-serif;">classesNoNamespace()</div>
<svg class="a" style="left:892px;top:309.51px;" width="14" height="11" viewBox="0 0 14 11"><circle cx="3" cy="5.5" r="2" fill="#d4d4d4"/><path d="M9.5 0.5L13 5.5L9.5 10.5L6 5.5z" fill="#9a6aac"/><path d="M9.5 0.5L13 5.5H6z" fill="#dcb8e8"/></svg>
<div class="t" style="left:909px;top:310.75px;font-size:8.7px;color:#555;font-weight:normal;font-style:normal;font-family:'Liberation Sans',sans-serif;">find()</div>
<svg class="a" style="left:892px;top:326.18px;" width="14" height="11" viewBox="0 0 14 11"><circle cx="3" cy="5.5" r="2" fill="#d4d4d4"/><path d="M9.5 0.5L13 5.5L9.5 10.5L6 5.5z" fill="#9a6aac"/><path d="M9.5 0.5L13 5.5H6z" fill="#dcb8e8"/></svg>
<div class="t" style="left:909px;top:327.42px;font-size:8.7px;color:#555;font-weight:normal;font-style:normal;font-family:'Liberation Sans',sans-serif;">findAttributeByName()</div>
<svg class="a" style="left:892px;top:342.85px;" width="14" height="11" viewBox="0 0 14 11"><circle cx="3" cy="5.5" r="2" fill="#d4d4d4"/><path d="M9.5 0.5L13 5.5L9.5 10.5L6 5.5z" fill="#9a6aac"/><path d="M9.5 0.5L13 5.5H6z" fill="#dcb8e8"/></svg>
<div class="t" style="left:909px;top:344.09px;font-size:8.7px;color:#555;font-weight:normal;font-style:normal;font-family:'Liberation Sans',sans-serif;">findClass()</div>
<svg class="a" style="left:892px;top:359.52px;" width="14" height="11" viewBox="0 0 14 11"><circle cx="3" cy="5.5" r="2" fill="#d4d4d4"/><path d="M9.5 0.5L13 5.5L9.5 10.5L6 5.5z" fill="#9a6aac"/><path d="M9.5 0.5L13 5.5H6z" fill="#dcb8e8"/></svg>
<div class="t" style="left:909px;top:360.76px;font-size:8.7px;color:#555;font-weight:normal;font-style:normal;font-family:'Liberation Sans',sans-serif;">findClassInNamespace()</div>
<svg class="a" style="left:892px;top:376.19px;" width="14" height="11" viewBox="0 0 14 11"><circle cx="3" cy="5.5" r="2" fill="#d4d4d4"/><path d="M9.5 0.5L13 5.5L9.5 10.5L6 5.5z" fill="#9a6aac"/><path d="M9.5 0.5L13 5.5H6z" fill="#dcb8e8"/></svg>
<div class="t" style="left:909px;top:377.43px;font-size:8.7px;color:#555;font-weight:normal;font-style:normal;font-family:'Liberation Sans',sans-serif;">findClassesWithAttribute()</div>
<svg class="a" style="left:892px;top:392.86px;" width="14" height="11" viewBox="0 0 14 11"><circle cx="3" cy="5.5" r="2" fill="#d4d4d4"/><path d="M9.5 0.5L13 5.5L9.5 10.5L6 5.5z" fill="#9a6aac"/><path d="M9.5 0.5L13 5.5H6z" fill="#dcb8e8"/></svg>
<div class="t" style="left:909px;top:394.10px;font-size:8.7px;color:#555;font-weight:normal;font-style:normal;font-family:'Liberation Sans',sans-serif;">findClassesWithOperation()</div>
<svg class="a" style="left:892px;top:409.53000000000003px;" width="14" height="11" viewBox="0 0 14 11"><circle cx="3" cy="5.5" r="2" fill="#d4d4d4"/><path d="M9.5 0.5L13 5.5L9.5 10.5L6 5.5z" fill="#9a6aac"/><path d="M9.5 0.5L13 5.5H6z" fill="#dcb8e8"/></svg>
<div class="t" style="left:909px;top:410.77px;font-size:8.7px;color:#555;font-weight:normal;font-style:normal;font-family:'Liberation Sans',sans-serif;">findOperationByName()</div>
<svg class="a" style="left:892px;top:426.20000000000005px;" width="14" height="11" viewBox="0 0 14 11"><circle cx="3" cy="5.5" r="2" fill="#d4d4d4"/><path d="M9.5 0.5L13 5.5L9.5 10.5L6 5.5z" fill="#9a6aac"/><path d="M9.5 0.5L13 5.5H6z" fill="#dcb8e8"/></svg>
<div class="t" style="left:909px;top:427.44px;font-size:8.7px;color:#555;font-weight:normal;font-style:normal;font-family:'Liberation Sans',sans-serif;">findTypedefRef()</div>
<svg class="a" style="left:892px;top:442.87px;" width="14" height="11" viewBox="0 0 14 11"><circle cx="3" cy="5.5" r="2" fill="#d4d4d4"/><path d="M9.5 0.5L13 5.5L9.5 10.5L6 5.5z" fill="#9a6aac"/><path d="M9.5 0.5L13 5.5H6z" fill="#dcb8e8"/></svg>
<div class="t" style="left:909px;top:444.11px;font-size:8.7px;color:#555;font-weight:normal;font-style:normal;font-family:'Liberation Sans',sans-serif;">globalmethod()</div>
<svg class="a" style="left:892px;top:459.54px;" width="14" height="11" viewBox="0 0 14 11"><circle cx="3" cy="5.5" r="2" fill="#d4d4d4"/><path d="M9.5 0.5L13 5.5L9.5 10.5L6 5.5z" fill="#9a6aac"/><path d="M9.5 0.5L13 5.5H6z" fill="#dcb8e8"/></svg>
<div class="t" style="left:909px;top:460.78px;font-size:8.7px;color:#555;font-weight:normal;font-style:normal;font-family:'Liberation Sans',sans-serif;">globalmethods()</div>
<svg class="a" style="left:892px;top:476.21000000000004px;" width="14" height="11" viewBox="0 0 14 11"><circle cx="3" cy="5.5" r="2" fill="#d4d4d4"/><path d="M9.5 0.5L13 5.5L9.5 10.5L6 5.5z" fill="#9a6aac"/><path d="M9.5 0.5L13 5.5H6z" fill="#dcb8e8"/></svg>
<div class="t" style="left:909px;top:477.45px;font-size:8.7px;color:#555;font-weight:normal;font-style:normal;font-family:'Liberation Sans',sans-serif;">interfaces()</div>
<svg class="a" style="left:892px;top:492.88px;" width="14" height="11" viewBox="0 0 14 11"><circle cx="3" cy="5.5" r="2" fill="#d4d4d4"/><path d="M9.5 0.5L13 5.5L9.5 10.5L6 5.5z" fill="#9a6aac"/><path d="M9.5 0.5L13 5.5H6z" fill="#dcb8e8"/></svg>
<div class="t" style="left:909px;top:494.12px;font-size:8.7px;color:#555;font-weight:normal;font-style:normal;font-family:'Liberation Sans',sans-serif;">listClassOperations()</div>
<svg class="a" style="left:892px;top:509.54999999999995px;" width="14" height="11" viewBox="0 0 14 11"><circle cx="3" cy="5.5" r="2" fill="#d4d4d4"/><path d="M9.5 0.5L13 5.5L9.5 10.5L6 5.5z" fill="#9a6aac"/><path d="M9.5 0.5L13 5.5H6z" fill="#dcb8e8"/></svg>
<div class="t" style="left:909px;top:510.79px;font-size:8.7px;color:#555;font-weight:normal;font-style:normal;font-family:'Liberation Sans',sans-serif;">namespace()</div>
<svg class="a" style="left:892px;top:526.22px;" width="14" height="11" viewBox="0 0 14 11"><circle cx="3" cy="5.5" r="2" fill="#d4d4d4"/><path d="M9.5 0.5L13 5.5L9.5 10.5L6 5.5z" fill="#9a6aac"/><path d="M9.5 0.5L13 5.5H6z" fill="#dcb8e8"/></svg>
<div class="t" style="left:909px;top:527.46px;font-size:8.7px;color:#555;font-weight:normal;font-style:normal;font-family:'Liberation Sans',sans-serif;">namespaceClasses()</div>
<svg class="a" style="left:892px;top:542.8900000000001px;" width="14" height="11" viewBox="0 0 14 11"><circle cx="3" cy="5.5" r="2" fill="#d4d4d4"/><path d="M9.5 0.5L13 5.5L9.5 10.5L6 5.5z" fill="#9a6aac"/><path d="M9.5 0.5L13 5.5H6z" fill="#dcb8e8"/></svg>
<div class="t" style="left:909px;top:544.13px;font-size:8.7px;color:#555;font-weight:normal;font-style:normal;font-family:'Liberation Sans',sans-serif;">namespaceUse()</div>
<svg class="a" style="left:892px;top:559.5600000000001px;" width="14" height="11" viewBox="0 0 14 11"><circle cx="3" cy="5.5" r="2" fill="#d4d4d4"/><path d="M9.5 0.5L13 5.5L9.5 10.5L6 5.5z" fill="#9a6aac"/><path d="M9.5 0.5L13 5.5H6z" fill="#dcb8e8"/></svg>
<div class="t" style="left:909px;top:560.80px;font-size:8.7px;color:#555;font-weight:normal;font-style:normal;font-family:'Liberation Sans',sans-serif;">operationCaller()</div>
<svg class="a" style="left:892px;top:576.23px;" width="14" height="11" viewBox="0 0 14 11"><circle cx="3" cy="5.5" r="2" fill="#d4d4d4"/><path d="M9.5 0.5L13 5.5L9.5 10.5L6 5.5z" fill="#9a6aac"/><path d="M9.5 0.5L13 5.5H6z" fill="#dcb8e8"/></svg>
<div class="t" style="left:909px;top:577.47px;font-size:8.7px;color:#555;font-weight:normal;font-style:normal;font-family:'Liberation Sans',sans-serif;">operationCalls()</div>
<svg class="a" style="left:892px;top:592.9000000000001px;" width="14" height="11" viewBox="0 0 14 11"><circle cx="3" cy="5.5" r="2" fill="#d4d4d4"/><path d="M9.5 0.5L13 5.5L9.5 10.5L6 5.5z" fill="#9a6aac"/><path d="M9.5 0.5L13 5.5H6z" fill="#dcb8e8"/></svg>
<div class="t" style="left:909px;top:594.14px;font-size:8.7px;color:#555;font-weight:normal;font-style:normal;font-family:'Liberation Sans',sans-serif;">operationDef()</div>
<svg class="a" style="left:892px;top:609.57px;" width="14" height="11" viewBox="0 0 14 11"><circle cx="3" cy="5.5" r="2" fill="#d4d4d4"/><path d="M9.5 0.5L13 5.5L9.5 10.5L6 5.5z" fill="#9a6aac"/><path d="M9.5 0.5L13 5.5H6z" fill="#dcb8e8"/></svg>
<div class="t" style="left:909px;top:610.81px;font-size:8.7px;color:#555;font-weight:normal;font-style:normal;font-family:'Liberation Sans',sans-serif;">typedAll()</div>
<svg class="a" style="left:892px;top:626.24px;" width="14" height="11" viewBox="0 0 14 11"><circle cx="3" cy="5.5" r="2" fill="#d4d4d4"/><path d="M9.5 0.5L13 5.5L9.5 10.5L6 5.5z" fill="#9a6aac"/><path d="M9.5 0.5L13 5.5H6z" fill="#dcb8e8"/></svg>
<div class="t" style="left:909px;top:627.48px;font-size:8.7px;color:#555;font-weight:normal;font-style:normal;font-family:'Liberation Sans',sans-serif;">typedMember()</div>
<svg class="a" style="left:892px;top:642.9100000000001px;" width="14" height="11" viewBox="0 0 14 11"><circle cx="3" cy="5.5" r="2" fill="#d4d4d4"/><path d="M9.5 0.5L13 5.5L9.5 10.5L6 5.5z" fill="#9a6aac"/><path d="M9.5 0.5L13 5.5H6z" fill="#dcb8e8"/></svg>
<div class="t" style="left:909px;top:644.15px;font-size:8.7px;color:#555;font-weight:normal;font-style:normal;font-family:'Liberation Sans',sans-serif;">typedParam()</div>
<svg class="a" style="left:892px;top:659.58px;" width="14" height="11" viewBox="0 0 14 11"><circle cx="3" cy="5.5" r="2" fill="#d4d4d4"/><path d="M9.5 0.5L13 5.5L9.5 10.5L6 5.5z" fill="#9a6aac"/><path d="M9.5 0.5L13 5.5H6z" fill="#dcb8e8"/></svg>
<div class="t" style="left:909px;top:660.82px;font-size:8.7px;color:#555;font-weight:normal;font-style:normal;font-family:'Liberation Sans',sans-serif;">typedReturn()</div>
<svg class="a" style="left:892px;top:676.25px;" width="14" height="11" viewBox="0 0 14 11"><circle cx="3" cy="5.5" r="2" fill="#d4d4d4"/><path d="M9.5 0.5L13 5.5L9.5 10.5L6 5.5z" fill="#9a6aac"/><path d="M9.5 0.5L13 5.5H6z" fill="#dcb8e8"/></svg>
<div class="t" style="left:909px;top:677.49px;font-size:8.7px;color:#555;font-weight:normal;font-style:normal;font-family:'Liberation Sans',sans-serif;">typedVariable()</div>
<svg class="a" style="left:892px;top:692.9200000000001px;" width="14" height="11" viewBox="0 0 14 11"><circle cx="3" cy="5.5" r="2" fill="#d4d4d4"/><path d="M9.5 0.5L13 5.5L9.5 10.5L6 5.5z" fill="#9a6aac"/><path d="M9.5 0.5L13 5.5H6z" fill="#dcb8e8"/></svg>
<div class="t" style="left:909px;top:694.16px;font-size:8.7px;color:#555;font-weight:normal;font-style:normal;font-family:'Liberation Sans',sans-serif;">variableAccess()</div>
<svg class="a" style="left:892px;top:709.59px;" width="14" height="11" viewBox="0 0 14 11"><circle cx="3" cy="5.5" r="2" fill="#d4d4d4"/><path d="M9.5 0.5L13 5.5L9.5 10.5L6 5.5z" fill="#9a6aac"/><path d="M9.5 0.5L13 5.5H6z" fill="#dcb8e8"/></svg>
<div class="t" style="left:909px;top:710.83px;font-size:8.7px;color:#555;font-weight:normal;font-style:normal;font-family:'Liberation Sans',sans-serif;">variableByName()</div>
<svg class="a" style="left:892px;top:726.26px;" width="14" height="11" viewBox="0 0 14 11"><circle cx="3" cy="5.5" r="2" fill="#d4d4d4"/><path d="M9.5 0.5L13 5.5L9.5 10.5L6 5.5z" fill="#9a6aac"/><path d="M9.5 0.5L13 5.5H6z" fill="#dcb8e8"/></svg>
<div class="t" style="left:909px;top:727.50px;font-size:8.7px;color:#555;font-weight:normal;font-style:normal;font-family:'Liberation Sans',sans-serif;">variableByType()</div>
<svg class="a" style="left:860px;top:745.0px;" width="4" height="7" viewBox="0 0 4 7"><path d="M0.5 0.5L3.5 3.5L0.5 6.5" stroke="#aaa" fill="none"/></svg>
<svg class="a" style="left:874px;top:742.5px;" width="14" height="12" viewBox="0 0 14 12"><path d="M0.75 2.25v9h12.5v-7.5h-6.5l-1.3-1.5h-4.7z" fill="#f6d9a8" stroke="#c9a27a" stroke-width="1.2"/></svg>
<div class="t" style="left:890.5px;top:744.24px;font-size:8.7px;color:#555;font-weight:normal;font-style:normal;font-family:'Liberation Sans',sans-serif;">cppMetrics</div>
<svg class="a" style="left:860px;top:761.67px;" width="4" height="7" viewBox="0 0 4 7"><path d="M0.5 0.5L3.5 3.5L0.5 6.5" stroke="#aaa" fill="none"/></svg>
<svg class="a" style="left:874px;top:759.17px;" width="14" height="12" viewBox="0 0 14 12"><path d="M0.75 2.25v9h12.5v-7.5h-6.5l-1.3-1.5h-4.7z" fill="#f6d9a8" stroke="#c9a27a" stroke-width="1.2"/></svg>
<div class="t" style="left:890.5px;top:760.91px;font-size:8.7px;color:#555;font-weight:normal;font-style:normal;font-family:'Liberation Sans',sans-serif;">cs</div>
<svg class="a" style="left:860px;top:778.34px;" width="4" height="7" viewBox="0 0 4 7"><path d="M0.5 0.5L3.5 3.5L0.5 6.5" stroke="#aaa" fill="none"/></svg>
<svg class="a" style="left:874px;top:775.84px;" width="14" height="12" viewBox="0 0 14 12"><path d="M0.75 2.25v9h12.5v-7.5h-6.5l-1.3-1.5h-4.7z" fill="#f6d9a8" stroke="#c9a27a" stroke-width="1.2"/></svg>
<div class="t" style="left:890.5px;top:777.58px;font-size:8.7px;color:#555;font-weight:normal;font-style:normal;font-family:'Liberation Sans',sans-serif;">java</div>
<svg class="a" style="left:860px;top:795.01px;" width="4" height="7" viewBox="0 0 4 7"><path d="M0.5 0.5L3.5 3.5L0.5 6.5" stroke="#aaa" fill="none"/></svg>
<svg class="a" style="left:874px;top:792.51px;" width="14" height="12" viewBox="0 0 14 12"><path d="M0.75 2.25v9h12.5v-7.5h-6.5l-1.3-1.5h-4.7z" fill="#f6d9a8" stroke="#c9a27a" stroke-width="1.2"/></svg>
<div class="t" style="left:890.5px;top:794.25px;font-size:8.7px;color:#555;font-weight:normal;font-style:normal;font-family:'Liberation Sans',sans-serif;">javaMetrics</div>
<svg class="a" style="left:860px;top:811.6800000000001px;" width="4" height="7" viewBox="0 0 4 7"><path d="M0.5 0.5L3.5 3.5L0.5 6.5" stroke="#aaa" fill="none"/></svg>
<svg class="a" style="left:874px;top:809.1800000000001px;" width="14" height="12" viewBox="0 0 14 12"><path d="M0.75 2.25v9h12.5v-7.5h-6.5l-1.3-1.5h-4.7z" fill="#f6d9a8" stroke="#c9a27a" stroke-width="1.2"/></svg>
<div class="t" style="left:890.5px;top:810.92px;font-size:8.7px;color:#555;font-weight:normal;font-style:normal;font-family:'Liberation Sans',sans-serif;">xml</div>
<div class="a" style="left:1170px;top:219px;width:430px;height:21px;background:#f0f0f0;"></div>
<div class="a" style="left:1182px;top:221.5px;width:198px;height:17px;background:#fdfdfd;border:1px solid #e2e2e2;border-radius:3px"></div>
<svg class="a" style="left:1390px;top:223px;" width="14" height="14" viewBox="0 0 14 14"><rect x="0.5" y="0.5" width="10" height="12" fill="#e8e8e8" stroke="#bbb"/><path d="M2 3h7M2 5h7M2 7h5" stroke="#ccc"/><path d="M7 9h5M10 7l3 2-3 2" stroke="#b8d070" stroke-width="1.6" fill="none"/></svg>
<div class="a" style="left:1410px;top:221px;width:1px;height:18px;background:#e4e4e4;"></div>
<div class="a" style="left:1421px;top:221.5px;width:182px;height:17px;background:#fdfdfd;border:1px solid #e2e2e2;border-radius:3px"></div>
<div class="a" style="left:1170px;top:240px;width:430px;height:608px;background:#ffffff;"></div>
<div class="a" style="left:1588px;top:240px;width:12px;height:608px;background:#f7f7f7;"></div>
<svg class="a" style="left:1590px;top:245px;" width="8" height="5" viewBox="0 0 8 5"><path d="M0 5L4 0L8 5z" fill="#666"/></svg>
<div class="a" style="left:1591px;top:255px;width:6px;height:50px;background:#d0d0d0;border-radius:3px"></div>
<svg class="a" style="left:1590px;top:836px;" width="8" height="5" viewBox="0 0 8 5"><path d="M0 0h8L4 5z" fill="#666"/></svg>
<div class="a" style="left:1170px;top:848px;width:430px;height:13px;background:#f0f0f0;"></div>
<svg class="a" style="left:1174px;top:850px;" width="5" height="8" viewBox="0 0 5 8"><path d="M5 0v8L0 4z" fill="#555"/></svg>
<div class="a" style="left:1183px;top:851px;width:130px;height:6px;background:#c8c8c8;border-radius:3px"></div>
<svg class="a" style="left:1576px;top:850px;" width="5" height="8" viewBox="0 0 5 8"><path d="M0 0v8l5-4z" fill="#555"/></svg>
<div class="a" style="left:0;top:0;width:1588px;height:848px;overflow:hidden">
<div class="t" style="left:1214px;top:243.33px;font-size:10.2px;color:#35967c;font-weight:normal;font-style:normal;font-family:'Liberation Mono',monospace;transform:translateX(-100%);-webkit-text-stroke:0.2px currentColor">1</div>
<div class="t" style="left:1216px;top:243.33px;font-size:10.2px;color:#222;font-weight:normal;font-style:normal;font-family:'Liberation Mono',monospace;-webkit-text-stroke:0.2px currentColor"><span style="color:#222">namespace&nbsp;cpp</span></div>
<div class="t" style="left:1214px;top:256.67px;font-size:10.2px;color:#35967c;font-weight:normal;font-style:normal;font-family:'Liberation Mono',monospace;transform:translateX(-100%);-webkit-text-stroke:0.2px currentColor">2</div>
<div class="t" style="left:1216px;top:256.67px;font-size:10.2px;color:#222;font-weight:normal;font-style:normal;font-family:'Liberation Mono',monospace;-webkit-text-stroke:0.2px currentColor"><span style="color:#222">{</span></div>
<div class="t" style="left:1214px;top:270.01px;font-size:10.2px;color:#35967c;font-weight:normal;font-style:normal;font-family:'Liberation Mono',monospace;transform:translateX(-100%);-webkit-text-stroke:0.2px currentColor">3</div>
<div class="t" style="left:1214px;top:283.35px;font-size:10.2px;color:#35967c;font-weight:normal;font-style:normal;font-family:'Liberation Mono',monospace;transform:translateX(-100%);-webkit-text-stroke:0.2px currentColor">4</div>
<div class="t" style="left:1216px;top:283.35px;font-size:10.2px;color:#222;font-weight:normal;font-style:normal;font-family:'Liberation Mono',monospace;-webkit-text-stroke:0.2px currentColor"><span style="color:#3a9e3a">//A&nbsp;general&nbsp;query&nbsp;to&nbsp;do&nbsp;a&nbsp;non-specific&nbsp;search</span></div>
<div class="t" style="left:1214px;top:296.69px;font-size:10.2px;color:#35967c;font-weight:normal;font-style:normal;font-family:'Liberation Mono',monospace;transform:translateX(-100%);-webkit-text-stroke:0.2px currentColor">5</div>
<div class="t" style="left:1216px;top:296.69px;font-size:10.2px;color:#222;font-weight:normal;font-style:normal;font-family:'Liberation Mono',monospace;-webkit-text-stroke:0.2px currentColor"><span style="color:#222">query::</span><span style="color:#1515c8">find</span><span style="color:#222">($param)</span></div>
<div class="t" style="left:1214px;top:310.03px;font-size:10.2px;color:#35967c;font-weight:normal;font-style:normal;font-family:'Liberation Mono',monospace;transform:translateX(-100%);-webkit-text-stroke:0.2px currentColor">6</div>
<div class="t" style="left:1216px;top:310.03px;font-size:10.2px;color:#222;font-weight:normal;font-style:normal;font-family:'Liberation Mono',monospace;-webkit-text-stroke:0.2px currentColor"><span style="color:#222">{</span></div>
<div class="t" style="left:1214px;top:323.37px;font-size:10.2px;color:#35967c;font-weight:normal;font-style:normal;font-family:'Liberation Mono',monospace;transform:translateX(-100%);-webkit-text-stroke:0.2px currentColor">7</div>
<div class="t" style="left:1216px;top:323.37px;font-size:10.2px;color:#222;font-weight:normal;font-style:normal;font-family:'Liberation Mono',monospace;-webkit-text-stroke:0.2px currentColor"><span style="color:#222">&nbsp;&nbsp;&nbsp;&nbsp;</span><span style="color:#1515c8">find</span><span style="color:#222">($param)</span></div>
<div class="t" style="left:1214px;top:336.71px;font-size:10.2px;color:#35967c;font-weight:normal;font-style:normal;font-family:'Liberation Mono',monospace;transform:translateX(-100%);-webkit-text-stroke:0.2px currentColor">8</div>
<div class="t" style="left:1216px;top:336.71px;font-size:10.2px;color:#222;font-weight:normal;font-style:normal;font-family:'Liberation Mono',monospace;-webkit-text-stroke:0.2px currentColor"><span style="color:#222">}</span></div>
<div class="t" style="left:1214px;top:350.05px;font-size:10.2px;color:#35967c;font-weight:normal;font-style:normal;font-family:'Liberation Mono',monospace;transform:translateX(-100%);-webkit-text-stroke:0.2px currentColor">9</div>
<div class="t" style="left:1214px;top:363.39px;font-size:10.2px;color:#35967c;font-weight:normal;font-style:normal;font-family:'Liberation Mono',monospace;transform:translateX(-100%);-webkit-text-stroke:0.2px currentColor">10</div>
<div class="t" style="left:1216px;top:363.39px;font-size:10.2px;color:#222;font-weight:normal;font-style:normal;font-family:'Liberation Mono',monospace;-webkit-text-stroke:0.2px currentColor"><span style="color:#3a9e3a">//Classes&nbsp;with&nbsp;a&nbsp;named&nbsp;operation</span></div>
<div class="t" style="left:1214px;top:376.73px;font-size:10.2px;color:#35967c;font-weight:normal;font-style:normal;font-family:'Liberation Mono',monospace;transform:translateX(-100%);-webkit-text-stroke:0.2px currentColor">11</div>
<div class="t" style="left:1216px;top:376.73px;font-size:10.2px;color:#222;font-weight:normal;font-style:normal;font-family:'Liberation Mono',monospace;-webkit-text-stroke:0.2px currentColor"><span style="color:#222">query::operationDef($param)</span></div>
<div class="t" style="left:1214px;top:390.07px;font-size:10.2px;color:#35967c;font-weight:normal;font-style:normal;font-family:'Liberation Mono',monospace;transform:translateX(-100%);-webkit-text-stroke:0.2px currentColor">12</div>
<div class="t" style="left:1216px;top:390.07px;font-size:10.2px;color:#222;font-weight:normal;font-style:normal;font-family:'Liberation Mono',monospace;-webkit-text-stroke:0.2px currentColor"><span style="color:#222">{</span></div>
<div class="t" style="left:1214px;top:403.41px;font-size:10.2px;color:#35967c;font-weight:normal;font-style:normal;font-family:'Liberation Mono',monospace;transform:translateX(-100%);-webkit-text-stroke:0.2px currentColor">13</div>
<div class="t" style="left:1216px;top:403.41px;font-size:10.2px;color:#222;font-weight:normal;font-style:normal;font-family:'Liberation Mono',monospace;-webkit-text-stroke:0.2px currentColor"><span style="color:#222">&nbsp;&nbsp;&nbsp;&nbsp;&nbsp;</span><span style="color:#1515c8">ancestor</span><span style="color:#222">(</span><span style="color:#c81818">&quot;CLASS&quot;</span><span style="color:#222">,&nbsp;</span><span style="color:#1515c8">this</span><span style="color:#222">(</span><span style="color:#c81818">&quot;OPERATION&quot;</span><span style="color:#222">,</span><span style="color:#c81818">&quot;NAME&quot;</span><span style="color:#222">,$param))</span></div>
<div class="t" style="left:1214px;top:416.75px;font-size:10.2px;color:#35967c;font-weight:normal;font-style:normal;font-family:'Liberation Mono',monospace;transform:translateX(-100%);-webkit-text-stroke:0.2px currentColor">14</div>
<div class="t" style="left:1216px;top:416.75px;font-size:10.2px;color:#222;font-weight:normal;font-style:normal;font-family:'Liberation Mono',monospace;-webkit-text-stroke:0.2px currentColor"><span style="color:#222">}</span></div>
<div class="t" style="left:1214px;top:430.09px;font-size:10.2px;color:#35967c;font-weight:normal;font-style:normal;font-family:'Liberation Mono',monospace;transform:translateX(-100%);-webkit-text-stroke:0.2px currentColor">15</div>
<div class="t" style="left:1214px;top:443.43px;font-size:10.2px;color:#35967c;font-weight:normal;font-style:normal;font-family:'Liberation Mono',monospace;transform:translateX(-100%);-webkit-text-stroke:0.2px currentColor">16</div>
<div class="t" style="left:1216px;top:443.43px;font-size:10.2px;color:#222;font-weight:normal;font-style:normal;font-family:'Liberation Mono',monospace;-webkit-text-stroke:0.2px currentColor"><span style="color:#3a9e3a">//calls&nbsp;to&nbsp;operations&nbsp;by&nbsp;name</span></div>
<div class="t" style="left:1214px;top:456.77px;font-size:10.2px;color:#35967c;font-weight:normal;font-style:normal;font-family:'Liberation Mono',monospace;transform:translateX(-100%);-webkit-text-stroke:0.2px currentColor">17</div>
<div class="t" style="left:1216px;top:456.77px;font-size:10.2px;color:#222;font-weight:normal;font-style:normal;font-family:'Liberation Mono',monospace;-webkit-text-stroke:0.2px currentColor"><span style="color:#222">query::operationCalls($param)</span></div>
<div class="t" style="left:1214px;top:470.11px;font-size:10.2px;color:#35967c;font-weight:normal;font-style:normal;font-family:'Liberation Mono',monospace;transform:translateX(-100%);-webkit-text-stroke:0.2px currentColor">18</div>
<div class="t" style="left:1216px;top:470.11px;font-size:10.2px;color:#222;font-weight:normal;font-style:normal;font-family:'Liberation Mono',monospace;-webkit-text-stroke:0.2px currentColor"><span style="color:#222">{</span></div>
<div class="t" style="left:1214px;top:483.45px;font-size:10.2px;color:#35967c;font-weight:normal;font-style:normal;font-family:'Liberation Mono',monospace;transform:translateX(-100%);-webkit-text-stroke:0.2px currentColor">19</div>
<div class="t" style="left:1216px;top:483.45px;font-size:10.2px;color:#222;font-weight:normal;font-style:normal;font-family:'Liberation Mono',monospace;-webkit-text-stroke:0.2px currentColor"><span style="color:#222">&nbsp;&nbsp;&nbsp;&nbsp;</span><span style="color:#1515c8">this</span><span style="color:#222">(</span><span style="color:#c81818">&quot;PROCEDURE_ACCESS&quot;</span><span style="color:#222">,</span><span style="color:#c81818">&quot;NAME&quot;</span><span style="color:#222">,$param)</span></div>
<div class="t" style="left:1214px;top:496.79px;font-size:10.2px;color:#35967c;font-weight:normal;font-style:normal;font-family:'Liberation Mono',monospace;transform:translateX(-100%);-webkit-text-stroke:0.2px currentColor">20</div>
<div class="t" style="left:1216px;top:496.79px;font-size:10.2px;color:#222;font-weight:normal;font-style:normal;font-family:'Liberation Mono',monospace;-webkit-text-stroke:0.2px currentColor"><span style="color:#222">}</span></div>
<div class="t" style="left:1214px;top:510.13px;font-size:10.2px;color:#35967c;font-weight:normal;font-style:normal;font-family:'Liberation Mono',monospace;transform:translateX(-100%);-webkit-text-stroke:0.2px currentColor">21</div>
<div class="t" style="left:1214px;top:523.47px;font-size:10.2px;color:#35967c;font-weight:normal;font-style:normal;font-family:'Liberation Mono',monospace;transform:translateX(-100%);-webkit-text-stroke:0.2px currentColor">22</div>
<div class="t" style="left:1216px;top:523.47px;font-size:10.2px;color:#222;font-weight:normal;font-style:normal;font-family:'Liberation Mono',monospace;-webkit-text-stroke:0.2px currentColor"><span style="color:#3a9e3a">//operations&nbsp;that&nbsp;call&nbsp;out&nbsp;to&nbsp;an&nbsp;operation&nbsp;by&nbsp;name</span></div>
<div class="t" style="left:1214px;top:536.81px;font-size:10.2px;color:#35967c;font-weight:normal;font-style:normal;font-family:'Liberation Mono',monospace;transform:translateX(-100%);-webkit-text-stroke:0.2px currentColor">23</div>
<div class="t" style="left:1216px;top:536.81px;font-size:10.2px;color:#222;font-weight:normal;font-style:normal;font-family:'Liberation Mono',monospace;-webkit-text-stroke:0.2px currentColor"><span style="color:#222">query::operationCaller($param)</span></div>
<div class="t" style="left:1214px;top:550.15px;font-size:10.2px;color:#35967c;font-weight:normal;font-style:normal;font-family:'Liberation Mono',monospace;transform:translateX(-100%);-webkit-text-stroke:0.2px currentColor">24</div>
<div class="t" style="left:1216px;top:550.15px;font-size:10.2px;color:#222;font-weight:normal;font-style:normal;font-family:'Liberation Mono',monospace;-webkit-text-stroke:0.2px currentColor"><span style="color:#222">{</span></div>
<div class="t" style="left:1214px;top:563.49px;font-size:10.2px;color:#35967c;font-weight:normal;font-style:normal;font-family:'Liberation Mono',monospace;transform:translateX(-100%);-webkit-text-stroke:0.2px currentColor">25</div>
<div class="t" style="left:1216px;top:563.49px;font-size:10.2px;color:#222;font-weight:normal;font-style:normal;font-family:'Liberation Mono',monospace;-webkit-text-stroke:0.2px currentColor"><span style="color:#222">&nbsp;&nbsp;&nbsp;&nbsp;</span><span style="color:#1515c8">ancestor</span><span style="color:#222">(&nbsp;</span><span style="color:#c81818">&quot;OPERATION&quot;</span><span style="color:#222">,</span><span style="color:#1515c8">this</span><span style="color:#222">(</span><span style="color:#c81818">&quot;PROCEDURE_ACCESS&quot;</span><span style="color:#222">,</span><span style="color:#c81818">&quot;NAME&quot;</span><span style="color:#222">,$pa</span></div>
<div class="t" style="left:1214px;top:576.83px;font-size:10.2px;color:#35967c;font-weight:normal;font-style:normal;font-family:'Liberation Mono',monospace;transform:translateX(-100%);-webkit-text-stroke:0.2px currentColor">26</div>
<div class="t" style="left:1216px;top:576.83px;font-size:10.2px;color:#222;font-weight:normal;font-style:normal;font-family:'Liberation Mono',monospace;-webkit-text-stroke:0.2px currentColor"><span style="color:#222">}</span></div>
<div class="t" style="left:1214px;top:590.17px;font-size:10.2px;color:#35967c;font-weight:normal;font-style:normal;font-family:'Liberation Mono',monospace;transform:translateX(-100%);-webkit-text-stroke:0.2px currentColor">27</div>
<div class="t" style="left:1214px;top:603.51px;font-size:10.2px;color:#35967c;font-weight:normal;font-style:normal;font-family:'Liberation Mono',monospace;transform:translateX(-100%);-webkit-text-stroke:0.2px currentColor">28</div>
<div class="t" style="left:1216px;top:603.51px;font-size:10.2px;color:#222;font-weight:normal;font-style:normal;font-family:'Liberation Mono',monospace;-webkit-text-stroke:0.2px currentColor"><span style="color:#3a9e3a">//find&nbsp;a&nbsp;variable&nbsp;definition&nbsp;by&nbsp;name</span></div>
<div class="t" style="left:1214px;top:616.85px;font-size:10.2px;color:#35967c;font-weight:normal;font-style:normal;font-family:'Liberation Mono',monospace;transform:translateX(-100%);-webkit-text-stroke:0.2px currentColor">29</div>
<div class="t" style="left:1216px;top:616.85px;font-size:10.2px;color:#222;font-weight:normal;font-style:normal;font-family:'Liberation Mono',monospace;-webkit-text-stroke:0.2px currentColor"><span style="color:#222">query::variableByName($param)</span></div>
<div class="t" style="left:1214px;top:630.19px;font-size:10.2px;color:#35967c;font-weight:normal;font-style:normal;font-family:'Liberation Mono',monospace;transform:translateX(-100%);-webkit-text-stroke:0.2px currentColor">30</div>
<div class="t" style="left:1216px;top:630.19px;font-size:10.2px;color:#222;font-weight:normal;font-style:normal;font-family:'Liberation Mono',monospace;-webkit-text-stroke:0.2px currentColor"><span style="color:#222">{</span></div>
<div class="t" style="left:1214px;top:643.53px;font-size:10.2px;color:#35967c;font-weight:normal;font-style:normal;font-family:'Liberation Mono',monospace;transform:translateX(-100%);-webkit-text-stroke:0.2px currentColor">31</div>
<div class="t" style="left:1216px;top:643.53px;font-size:10.2px;color:#222;font-weight:normal;font-style:normal;font-family:'Liberation Mono',monospace;-webkit-text-stroke:0.2px currentColor"><span style="color:#222">&nbsp;&nbsp;&nbsp;&nbsp;&nbsp;</span><span style="color:#1515c8">this</span><span style="color:#222">(</span><span style="color:#c81818">&quot;PROPERTY&quot;</span><span style="color:#222">,</span><span style="color:#c81818">&quot;NAME&quot;</span><span style="color:#222">,$param)</span></div>
<div class="t" style="left:1214px;top:656.87px;font-size:10.2px;color:#35967c;font-weight:normal;font-style:normal;font-family:'Liberation Mono',monospace;transform:translateX(-100%);-webkit-text-stroke:0.2px currentColor">32</div>
<div class="t" style="left:1216px;top:656.87px;font-size:10.2px;color:#222;font-weight:normal;font-style:normal;font-family:'Liberation Mono',monospace;-webkit-text-stroke:0.2px currentColor"><span style="color:#222">}</span></div>
<div class="t" style="left:1214px;top:670.21px;font-size:10.2px;color:#35967c;font-weight:normal;font-style:normal;font-family:'Liberation Mono',monospace;transform:translateX(-100%);-webkit-text-stroke:0.2px currentColor">33</div>
<div class="t" style="left:1214px;top:683.55px;font-size:10.2px;color:#35967c;font-weight:normal;font-style:normal;font-family:'Liberation Mono',monospace;transform:translateX(-100%);-webkit-text-stroke:0.2px currentColor">34</div>
<div class="t" style="left:1216px;top:683.55px;font-size:10.2px;color:#222;font-weight:normal;font-style:normal;font-family:'Liberation Mono',monospace;-webkit-text-stroke:0.2px currentColor"><span style="color:#3a9e3a">//find&nbsp;a&nbsp;variable&nbsp;definition&nbsp;by&nbsp;type</span></div>
<div class="t" style="left:1214px;top:696.89px;font-size:10.2px;color:#35967c;font-weight:normal;font-style:normal;font-family:'Liberation Mono',monospace;transform:translateX(-100%);-webkit-text-stroke:0.2px currentColor">35</div>
<div class="t" style="left:1216px;top:696.89px;font-size:10.2px;color:#222;font-weight:normal;font-style:normal;font-family:'Liberation Mono',monospace;-webkit-text-stroke:0.2px currentColor"><span style="color:#222">query::variableByType($param)</span></div>
<div class="t" style="left:1214px;top:710.23px;font-size:10.2px;color:#35967c;font-weight:normal;font-style:normal;font-family:'Liberation Mono',monospace;transform:translateX(-100%);-webkit-text-stroke:0.2px currentColor">36</div>
<div class="t" style="left:1216px;top:710.23px;font-size:10.2px;color:#222;font-weight:normal;font-style:normal;font-family:'Liberation Mono',monospace;-webkit-text-stroke:0.2px currentColor"><span style="color:#222">{</span></div>
<div class="t" style="left:1214px;top:723.57px;font-size:10.2px;color:#35967c;font-weight:normal;font-style:normal;font-family:'Liberation Mono',monospace;transform:translateX(-100%);-webkit-text-stroke:0.2px currentColor">37</div>
<div class="t" style="left:1216px;top:723.57px;font-size:10.2px;color:#222;font-weight:normal;font-style:normal;font-family:'Liberation Mono',monospace;-webkit-text-stroke:0.2px currentColor"><span style="color:#222">&nbsp;&nbsp;&nbsp;&nbsp;&nbsp;</span><span style="color:#1515c8">this</span><span style="color:#222">(</span><span style="color:#c81818">&quot;PROPERTY&quot;</span><span style="color:#222">,</span><span style="color:#c81818">&quot;TYPE&quot;</span><span style="color:#222">,$param)</span></div>
<div class="t" style="left:1214px;top:736.91px;font-size:10.2px;color:#35967c;font-weight:normal;font-style:normal;font-family:'Liberation Mono',monospace;transform:translateX(-100%);-webkit-text-stroke:0.2px currentColor">38</div>
<div class="t" style="left:1216px;top:736.91px;font-size:10.2px;color:#222;font-weight:normal;font-style:normal;font-family:'Liberation Mono',monospace;-webkit-text-stroke:0.2px currentColor"><span style="color:#222">}</span></div>
<div class="t" style="left:1214px;top:750.25px;font-size:10.2px;color:#35967c;font-weight:normal;font-style:normal;font-family:'Liberation Mono',monospace;transform:translateX(-100%);-webkit-text-stroke:0.2px currentColor">39</div>
<div class="t" style="left:1214px;top:763.59px;font-size:10.2px;color:#35967c;font-weight:normal;font-style:normal;font-family:'Liberation Mono',monospace;transform:translateX(-100%);-webkit-text-stroke:0.2px currentColor">40</div>
<div class="t" style="left:1216px;top:763.59px;font-size:10.2px;color:#222;font-weight:normal;font-style:normal;font-family:'Liberation Mono',monospace;-webkit-text-stroke:0.2px currentColor"><span style="color:#3a9e3a">//find&nbsp;where&nbsp;a&nbsp;named&nbsp;variable&nbsp;is&nbsp;used</span></div>
<div class="t" style="left:1214px;top:776.93px;font-size:10.2px;color:#35967c;font-weight:normal;font-style:normal;font-family:'Liberation Mono',monospace;transform:translateX(-100%);-webkit-text-stroke:0.2px currentColor">41</div>
<div class="t" style="left:1216px;top:776.93px;font-size:10.2px;color:#222;font-weight:normal;font-style:normal;font-family:'Liberation Mono',monospace;-webkit-text-stroke:0.2px currentColor"><span style="color:#222">query::variableAccess($param)</span></div>
<div class="t" style="left:1214px;top:790.27px;font-size:10.2px;color:#35967c;font-weight:normal;font-style:normal;font-family:'Liberation Mono',monospace;transform:translateX(-100%);-webkit-text-stroke:0.2px currentColor">42</div>
<div class="t" style="left:1216px;top:790.27px;font-size:10.2px;color:#222;font-weight:normal;font-style:normal;font-family:'Liberation Mono',monospace;-webkit-text-stroke:0.2px currentColor"><span style="color:#222">{</span></div>
<div class="t" style="left:1214px;top:803.61px;font-size:10.2px;color:#35967c;font-weight:normal;font-style:normal;font-family:'Liberation Mono',monospace;transform:translateX(-100%);-webkit-text-stroke:0.2px currentColor">43</div>
<div class="t" style="left:1216px;top:803.61px;font-size:10.2px;color:#222;font-weight:normal;font-style:normal;font-family:'Liberation Mono',monospace;-webkit-text-stroke:0.2px currentColor"><span style="color:#222">&nbsp;&nbsp;&nbsp;&nbsp;</span><span style="color:#1515c8">this</span><span style="color:#222">(</span><span style="color:#c81818">&quot;VARIABLE_ACCESS&quot;</span><span style="color:#222">,</span><span style="color:#c81818">&quot;NAME&quot;</span><span style="color:#222">,$param)</span></div>
<div class="t" style="left:1214px;top:816.95px;font-size:10.2px;color:#35967c;font-weight:normal;font-style:normal;font-family:'Liberation Mono',monospace;transform:translateX(-100%);-webkit-text-stroke:0.2px currentColor">44</div>
<div class="t" style="left:1216px;top:816.95px;font-size:10.2px;color:#222;font-weight:normal;font-style:normal;font-family:'Liberation Mono',monospace;-webkit-text-stroke:0.2px currentColor"><span style="color:#222">}</span></div>
<div class="t" style="left:1214px;top:830.29px;font-size:10.2px;color:#35967c;font-weight:normal;font-style:normal;font-family:'Liberation Mono',monospace;transform:translateX(-100%);-webkit-text-stroke:0.2px currentColor">45</div>
<div class="t" style="left:1214px;top:843.63px;font-size:10.2px;color:#35967c;font-weight:normal;font-style:normal;font-family:'Liberation Mono',monospace;transform:translateX(-100%);-webkit-text-stroke:0.2px currentColor">46</div>
<div class="t" style="left:1216px;top:843.63px;font-size:10.2px;color:#222;font-weight:normal;font-style:normal;font-family:'Liberation Mono',monospace;-webkit-text-stroke:0.2px currentColor"><span style="color:#222">query::namespaceClasses($param)</span></div>
</div>
<div class="a" style="left:1242px;top:401.08px;width:1px;height:12px;background:#e6e6e6;"></div>
<div class="a" style="left:1242px;top:641.2px;width:1px;height:12px;background:#e6e6e6;"></div>
<div class="a" style="left:1242px;top:721.24px;width:1px;height:12px;background:#e6e6e6;"></div>
<div class="a" style="left:0px;top:862px;width:1600px;height:26px;background:#f7f7f7;"></div>
<div class="a" style="left:0px;top:862px;width:1600px;height:1px;background:#e8e8e8;"></div>
<div class="t" style="left:2px;top:867.13px;font-size:9.3px;color:#5a5a5a;font-weight:normal;font-style:normal;font-family:'Liberation Sans',sans-serif;">Custom Diagram:Design Patterns:</div>
<div class="t" style="left:152px;top:867.13px;font-size:9.3px;color:#5a5a5a;font-weight:normal;font-style:normal;font-family:'Liberation Sans',sans-serif;">created: 4/5/2017</div>
<div class="t" style="left:232px;top:867.21px;font-size:9.2px;color:#5a5a5a;font-weight:normal;font-style:normal;font-family:'Liberation Sans',sans-serif;">modified: 4/5/2017 5:43:34 PM</div>
<div class="t" style="left:369.5px;top:867.13px;font-size:9.3px;color:#5a5a5a;font-weight:normal;font-style:normal;font-family:'Liberation Sans',sans-serif;">175%</div>
<div class="t" style="left:401px;top:867.13px;font-size:9.3px;color:#5a5a5a;font-weight:normal;font-style:normal;font-family:'Liberation Sans',sans-serif;">998 x 655</div>
<div class="a" style="left:1355px;top:871px;width:7px;height:1px;background:#999;"></div>
<div class="a" style="left:1370px;top:871px;width:70px;height:1px;background:#d0d0d0;"></div>
<div class="a" style="left:1369px;top:865px;width:2px;height:13px;background:#aaa;"></div>
<div class="a" style="left:1372px;top:865px;width:1px;height:13px;background:#ddd;"></div>
<svg class="a" style="left:1449px;top:867px;" width="9" height="9" viewBox="0 0 9 9"><path d="M4.5 0v9M0 4.5h9" stroke="#aaa"/></svg>
<div class="t" style="left:1467px;top:867.38px;font-size:9px;color:#c0c0c0;font-weight:normal;font-style:normal;font-family:'Liberation Sans',sans-serif;">CAP</div>
<div class="t" style="left:1496px;top:867.38px;font-size:9px;color:#5a5a5a;font-weight:normal;font-style:normal;font-family:'Liberation Sans',sans-serif;">NUM</div>
<div class="t" style="left:1530px;top:867.38px;font-size:9px;color:#c0c0c0;font-weight:normal;font-style:normal;font-family:'Liberation Sans',sans-serif;">SCRL</div>
<div class="t" style="left:1563px;top:867.38px;font-size:9px;color:#c0c0c0;font-weight:normal;font-style:normal;font-family:'Liberation Sans',sans-serif;">CLOUD</div>
</body></html>
